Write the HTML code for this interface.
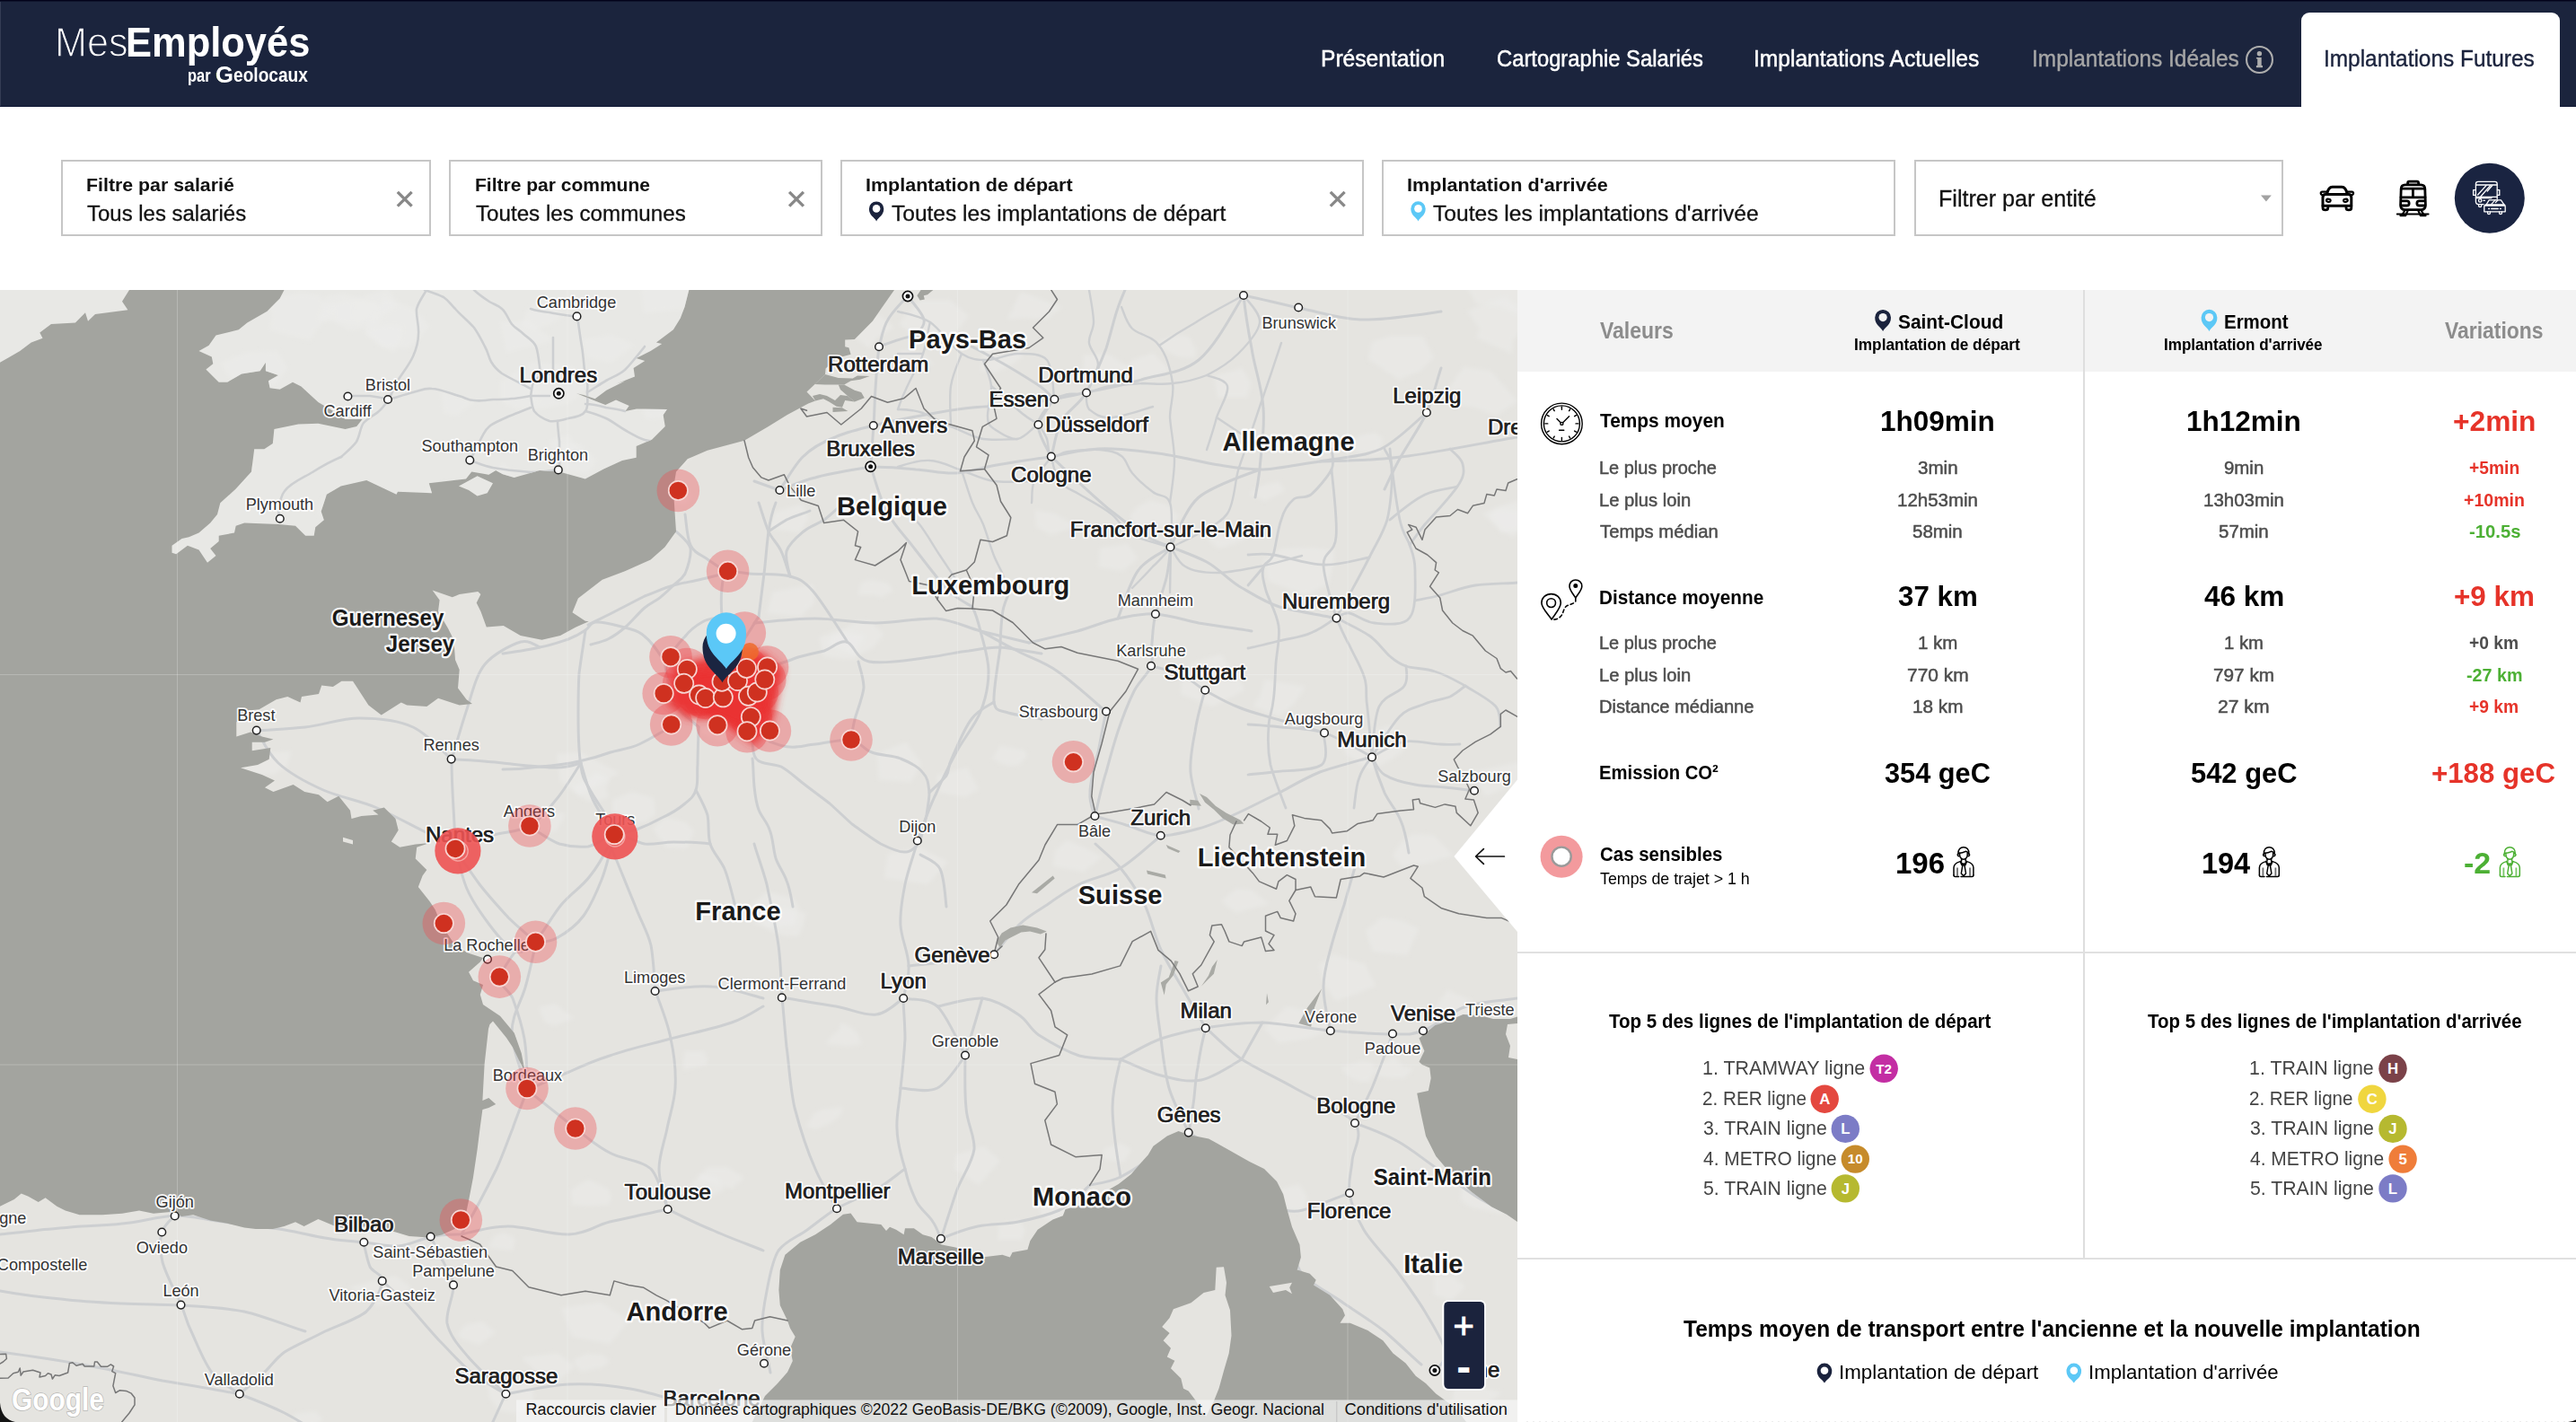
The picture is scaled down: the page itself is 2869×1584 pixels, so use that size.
<!DOCTYPE html>
<html lang="fr">
<head>
<meta charset="utf-8">
<title>MesEmployés par Geolocaux – Implantations Futures</title>
<style>
html,body{margin:0;padding:0;background:#fff;}
body{width:2869px;height:1584px;overflow:hidden;position:relative;font-family:"Liberation Sans",sans-serif;}
.abs{position:absolute;}
.t{position:absolute;white-space:nowrap;transform-origin:0 0;font-family:"Liberation Sans",sans-serif;}
.thin{-webkit-text-stroke:1.3px #1b233d;}
#hdr{left:0;top:0;width:2869px;height:119px;background:#1b243d;border-top:1px solid #03021a;border-bottom:1px solid #0d1532;box-sizing:border-box;box-shadow:inset 0 1px 0 #0f152c, inset 1px 0 0 #343c54;}
#tab{left:2563px;top:14px;width:288px;height:106px;background:#fff;border-radius:9px 9px 0 0;}
.fbox{position:absolute;top:178px;height:85px;border:2px solid #c6c6c6;box-sizing:border-box;background:#fff;}
#map{left:0;top:323px;width:1690px;height:1261px;overflow:hidden;background:#a3a49f;}
#panel{left:1690px;top:323px;width:1189px;height:1261px;background:#fff;}
#phead{left:0;top:0;width:1189px;height:91px;background:#f3f3f3;}
.vdiv{position:absolute;left:630px;top:0;width:2px;height:1079px;background:#dedede;}
.hdiv{position:absolute;left:0;width:1189px;height:2px;background:#e0e0e0;}
#icons{left:0;top:0;width:2869px;height:1584px;pointer-events:none;}
</style>
</head>
<body>
<header id="hdr" class="abs"></header>
<div id="tab" class="abs"></div>

<section id="filters">
<div class="fbox" style="left:68px;width:412px"></div>
<div class="fbox" style="left:500px;width:416px"></div>
<div class="fbox" style="left:936px;width:583px"></div>
<div class="fbox" style="left:1539px;width:572px"></div>
<div class="fbox" style="left:2132px;width:411px"></div>
</section>

<div id="map" class="abs">
<svg width="1690" height="1261" viewBox="0 323 1690 1261" style="position:absolute;left:0;top:0;display:block" font-family="Liberation Sans, sans-serif">
<defs><filter id="blur6" x="-30%" y="-30%" width="160%" height="160%"><feGaussianBlur stdDeviation="5"/></filter><filter id="blur1" x="-30%" y="-30%" width="160%" height="160%"><feGaussianBlur stdDeviation="0.7"/></filter><filter id="blur3" x="-30%" y="-30%" width="160%" height="160%"><feGaussianBlur stdDeviation="2.2"/></filter><clipPath id="gbclip"><path d="M316.5,323.0 L311.7,332.5 L297.5,346.7 L275.3,359.4 L265.8,367.3 L240.5,373.6 L232.6,384.7 L221.5,391.0 L235.8,397.4 L237.3,405.3 L229.4,411.6 L243.7,425.8 L253.2,425.8 L269.0,416.4 L289.6,413.2 L295.9,403.7 L295.9,413.2 L310.0,418.0 L299.0,424.3 L300.6,432.2 L311.7,433.8 L326.0,425.8 L335.4,430.6 L354.4,448.0 L370.3,457.5 L384.5,467.0 L403.5,467.0 L397.2,474.9 L384.5,478.0 L354.4,471.7 L332.3,472.4 L305.4,478.0 L303.8,493.9 L294.3,500.2 L283.2,500.2 L280.0,525.5 L262.7,544.5 L245.3,560.3 L242.0,573.0 L234.2,582.5 L221.5,593.6 L210.4,598.3 L202.5,600.0 L191.5,607.8 L191.5,615.7 L196.2,617.3 L208.9,607.8 L221.5,612.6 L231.0,626.8 L240.5,618.9 L234.2,611.0 L243.7,603.0 L243.7,596.7 L261.0,593.6 L262.7,585.7 L272.2,582.5 L310.0,584.0 L329.0,585.7 L340.2,596.7 L349.7,596.7 L351.3,587.2 L360.8,579.3 L357.6,569.8 L363.9,550.8 L379.7,541.4 L408.2,535.0 L441.5,550.8 L443.0,547.7 L481.0,549.3 L477.8,538.2 L519.0,533.4 L525.3,525.5 L544.3,528.7 L552.2,524.0 L560.0,528.3 L572.7,531.9 L601.0,524.0 L623.0,525.5 L651.8,533.4 L672.3,522.4 L693.0,512.9 L708.7,509.7 L708.7,497.0 L726.0,489.7 L740.8,475.0 L738.6,462.2 L742.9,456.0 L709.0,455.5 L696.5,458.0 L700.7,452.0 L686.0,445.4 L674.3,451.0 L662.7,446.4 L641.6,438.0 L650.0,440.0 L662.7,444.3 L675.4,434.8 L696.5,424.3 L686.6,427.4 L707.0,419.5 L705.6,410.0 L718.2,402.0 L708.7,399.0 L724.6,391.0 L737.2,383.0 L730.9,381.5 L749.9,367.3 L757.8,354.6 L762.5,342.0 L767.3,323.0Z"/></clipPath></defs>
<rect x="0" y="323" width="1690" height="1261" fill="#e5e4e0"/>
<g fill="#eeedeb" fill-opacity="0.5" filter="url(#blur3)" ><path d="M894,1032 L889,1043 L873,1042 L861,1038 L839,1028 L855,1014 L872,1012 L898,1017Z"/><path d="M1142,1370 L1138,1381 L1111,1381 L1113,1364 L1135,1359Z"/><path d="M907,672 L891,687 L854,683 L861,659 L905,651Z"/><path d="M225,592 L217,604 L181,594 L179,582 L219,570Z"/><path d="M392,633 L378,642 L357,642 L365,626 L380,624Z"/><path d="M1704,318 L1691,350 L1668,340 L1645,339 L1633,319 L1674,300 L1688,305Z"/><path d="M1183,342 L1165,356 L1140,354 L1122,356 L1132,335 L1137,325 L1164,335Z"/><path d="M1632,1433 L1616,1449 L1597,1442 L1597,1422 L1619,1423Z"/><path d="M1303,412 L1288,420 L1250,425 L1248,414 L1262,401 L1284,393Z"/><path d="M1690,447 L1666,463 L1643,454 L1603,448 L1630,409 L1660,413Z"/><path d="M937,1241 L927,1250 L908,1258 L898,1255 L906,1241 L915,1236 L939,1233Z"/><path d="M278,952 L250,967 L208,968 L221,935 L254,930Z"/><path d="M1090,879 L1075,888 L1047,883 L1043,864 L1077,855Z"/><path d="M773,506 L756,522 L739,520 L717,507 L737,483 L756,490Z"/><path d="M552,1484 L534,1498 L516,1492 L509,1487 L518,1476 L537,1472Z"/><path d="M955,723 L954,734 L939,734 L917,731 L914,719 L912,710 L932,702 L963,708Z"/><path d="M401,463 L390,475 L374,485 L344,466 L339,454 L368,435 L403,438Z"/><path d="M807,1325 L798,1330 L773,1335 L767,1323 L780,1307 L799,1313Z"/><path d="M1199,586 L1171,596 L1154,587 L1153,568 L1174,572Z"/><path d="M890,1011 L885,1030 L856,1033 L838,1020 L830,1013 L854,994 L883,1000Z"/><path d="M970,1519 L938,1543 L911,1537 L916,1506 L953,1492Z"/><path d="M1532,1098 L1513,1106 L1488,1115 L1475,1097 L1469,1075 L1484,1063 L1520,1074Z"/><path d="M1263,412 L1250,416 L1235,422 L1201,419 L1207,406 L1206,396 L1234,394 L1243,400Z"/><path d="M515,608 L511,621 L489,625 L474,616 L469,603 L483,596 L500,601Z"/><path d="M535,1123 L511,1133 L482,1137 L480,1115 L482,1099 L518,1095Z"/><path d="M1540,489 L1536,506 L1511,504 L1501,494 L1518,484 L1532,482Z"/><path d="M1444,780 L1439,786 L1425,798 L1396,787 L1403,775 L1409,757 L1454,765Z"/><path d="M358,399 L354,408 L345,412 L333,406 L325,403 L329,394 L347,389 L353,389Z"/><path d="M713,426 L710,445 L685,443 L665,438 L662,426 L659,417 L680,412 L695,418Z"/><path d="M499,1324 L492,1345 L473,1352 L453,1334 L451,1319 L470,1312 L500,1317Z"/><path d="M1260,1281 L1251,1295 L1226,1290 L1230,1280 L1248,1273Z"/><path d="M1026,850 L1015,871 L979,869 L977,839 L1009,827Z"/><path d="M1139,397 L1127,406 L1108,415 L1092,413 L1094,398 L1097,390 L1104,377 L1133,380Z"/><path d="M1332,389 L1331,399 L1314,398 L1294,389 L1292,379 L1314,373 L1324,375Z"/><path d="M901,577 L891,593 L856,589 L863,570 L893,562Z"/><path d="M432,685 L412,704 L396,700 L381,687 L393,675 L415,680Z"/><path d="M594,1554 L592,1576 L557,1572 L546,1558 L542,1539 L592,1536Z"/><path d="M773,926 L765,945 L742,944 L727,923 L741,910 L764,916Z"/><path d="M457,1381 L448,1389 L423,1392 L408,1386 L406,1371 L428,1363 L440,1372Z"/><path d="M701,1471 L679,1497 L637,1489 L625,1457 L669,1451Z"/><path d="M1108,1464 L1104,1472 L1070,1481 L1067,1470 L1064,1455 L1079,1446 L1099,1445Z"/><path d="M1414,1007 L1396,1011 L1377,1017 L1360,1004 L1377,990 L1393,991Z"/><path d="M1393,426 L1389,443 L1356,443 L1352,419 L1383,410Z"/><path d="M730,907 L720,915 L694,919 L682,905 L682,891 L704,882 L728,889Z"/><path d="M1658,1134 L1643,1142 L1611,1158 L1606,1138 L1597,1125 L1612,1103 L1638,1114Z"/><path d="M394,1142 L395,1166 L360,1157 L331,1142 L355,1119 L389,1120Z"/><path d="M1564,836 L1546,848 L1526,858 L1498,839 L1494,825 L1526,815 L1550,808Z"/><path d="M1699,1317 L1673,1352 L1639,1345 L1627,1337 L1629,1312 L1653,1309 L1689,1308Z"/><path d="M424,1253 L412,1268 L386,1270 L376,1268 L370,1249 L396,1237 L409,1238Z"/><path d="M1056,960 L1033,985 L985,978 L989,951 L1024,944Z"/><path d="M689,421 L686,430 L649,447 L617,428 L626,413 L663,389 L683,402Z"/><path d="M409,1291 L380,1325 L337,1317 L343,1296 L347,1279 L378,1276Z"/><path d="M626,915 L619,926 L602,928 L594,922 L580,907 L600,905 L629,906Z"/><path d="M1378,750 L1386,769 L1350,787 L1315,773 L1316,752 L1332,737 L1360,729 L1366,739Z"/><path d="M675,878 L678,888 L660,894 L647,888 L636,878 L646,872 L665,861 L679,868Z"/><path d="M1079,352 L1062,373 L1033,385 L1001,361 L1024,334 L1058,334Z"/><path d="M1040,406 L1024,410 L1008,410 L997,407 L999,396 L1005,390 L1029,395Z"/><path d="M829,1312 L815,1324 L792,1317 L778,1313 L787,1300 L810,1300Z"/><path d="M995,658 L982,665 L972,663 L955,663 L960,648 L970,646 L988,649Z"/><path d="M1574,1190 L1564,1201 L1550,1201 L1535,1199 L1531,1193 L1537,1186 L1553,1177 L1562,1188Z"/><path d="M1485,628 L1479,651 L1453,663 L1412,647 L1408,624 L1427,611 L1459,610 L1486,613Z"/><path d="M409,414 L394,420 L376,423 L358,418 L377,403 L392,401Z"/><path d="M300,362 L277,376 L267,375 L238,366 L240,357 L261,348 L282,345Z"/><path d="M1696,580 L1700,589 L1672,594 L1659,574 L1667,566 L1697,569Z"/><path d="M333,606 L328,615 L316,615 L299,608 L299,602 L319,588 L325,596Z"/><path d="M438,1164 L415,1177 L396,1186 L369,1191 L366,1170 L379,1148 L392,1139 L426,1137Z"/><path d="M1695,366 L1685,379 L1684,394 L1644,376 L1648,366 L1634,346 L1676,331 L1703,350Z"/><path d="M1114,1293 L1090,1320 L1063,1302 L1065,1286 L1096,1277Z"/><path d="M274,1079 L262,1086 L230,1086 L233,1067 L262,1064Z"/><path d="M1580,1035 L1567,1064 L1529,1060 L1521,1037 L1539,1022 L1563,1026Z"/><path d="M956,1153 L960,1163 L945,1165 L920,1163 L924,1156 L934,1148 L937,1139 L949,1145Z"/><path d="M690,861 L645,886 L624,870 L620,840 L646,838Z"/><path d="M679,1516 L671,1523 L647,1528 L638,1516 L652,1508 L671,1509Z"/><path d="M1391,598 L1377,605 L1357,611 L1345,601 L1350,589 L1359,580 L1373,587Z"/><path d="M640,1522 L621,1539 L598,1529 L581,1512 L621,1507Z"/><path d="M574,1380 L571,1393 L544,1390 L550,1377 L562,1373Z"/><path d="M277,512 L267,520 L252,521 L242,512 L252,507 L268,501Z"/><path d="M823,809 L814,816 L805,826 L779,817 L790,802 L800,792 L816,796Z"/><path d="M1208,1528 L1206,1537 L1194,1540 L1175,1535 L1178,1524 L1187,1514 L1204,1513Z"/><path d="M594,445 L592,462 L552,473 L531,444 L519,420 L545,420 L582,427Z"/><path d="M1294,1439 L1275,1449 L1261,1445 L1256,1433 L1280,1432Z"/><path d="M1087,1513 L1068,1527 L1022,1522 L1024,1497 L1059,1497Z"/><path d="M984,707 L972,722 L954,730 L919,717 L927,709 L955,691 L970,692Z"/><path d="M1531,1192 L1526,1205 L1515,1205 L1504,1201 L1493,1189 L1517,1182 L1529,1184Z"/><path d="M1228,954 L1207,971 L1173,965 L1175,948 L1188,936 L1205,943Z"/><path d="M1144,842 L1135,852 L1124,853 L1114,850 L1105,845 L1114,831 L1127,833 L1141,836Z"/><path d="M1456,1334 L1450,1350 L1426,1347 L1411,1330 L1428,1324 L1447,1319Z"/><path d="M788,1181 L787,1186 L761,1192 L761,1182 L763,1171 L784,1171Z"/><path d="M681,1334 L678,1342 L655,1343 L637,1342 L636,1325 L655,1314 L677,1324Z"/><path d="M458,1434 L443,1449 L421,1455 L410,1445 L388,1434 L420,1426 L440,1421Z"/><path d="M1720,577 L1699,586 L1685,598 L1668,588 L1651,572 L1673,563 L1692,557 L1696,568Z"/><path d="M474,468 L464,485 L438,477 L428,463 L455,461Z"/><path d="M1619,953 L1587,962 L1562,966 L1551,953 L1561,938 L1573,929 L1596,930Z"/><path d="M1205,1345 L1207,1359 L1172,1361 L1160,1354 L1157,1343 L1171,1331 L1191,1333Z"/><path d="M771,553 L762,563 L743,556 L746,546 L761,546Z"/><path d="M1707,869 L1678,877 L1655,887 L1638,860 L1663,855 L1691,849Z"/><path d="M1597,398 L1582,413 L1558,423 L1524,400 L1528,381 L1549,374 L1584,374Z"/><path d="M996,365 L978,375 L968,388 L949,373 L931,360 L942,349 L959,340 L983,354Z"/><path d="M1487,1146 L1457,1157 L1424,1162 L1408,1146 L1433,1121 L1470,1129Z"/><path d="M639,1134 L618,1143 L607,1139 L600,1122 L618,1118Z"/><path d="M1431,547 L1415,555 L1409,558 L1391,551 L1401,543 L1410,539 L1425,537Z"/><path d="M1313,575 L1303,590 L1282,584 L1267,588 L1258,575 L1266,565 L1281,557 L1300,562Z"/><path d="M241,408 L225,423 L194,427 L181,406 L194,391 L233,396Z"/><path d="M1267,622 L1251,636 L1224,632 L1225,610 L1256,606Z"/><path d="M320,853 L306,862 L290,863 L268,862 L274,840 L288,839 L324,837Z"/><path d="M388,1147 L389,1171 L352,1173 L312,1169 L316,1160 L331,1137 L355,1131 L387,1135Z"/><path d="M1673,1551 L1661,1560 L1637,1573 L1617,1568 L1618,1554 L1622,1539 L1646,1542 L1659,1548Z"/><path d="M1658,1206 L1641,1218 L1627,1219 L1593,1214 L1611,1191 L1619,1180 L1660,1186Z"/><path d="M360,1581 L345,1592 L330,1589 L327,1575 L351,1572Z"/><path d="M498,448 L487,479 L436,474 L407,453 L445,433 L460,438Z"/></g><g fill="none" stroke="#cdcfd1" stroke-linecap="round" stroke-linejoin="round" ><path d="M810,737 C809,729 805,700 804,687 C803,673 803,663 804,655 C805,647 805,640 810,638 C815,635 824,638 835,639 C847,640 868,639 880,642 C891,645 895,647 905,658 C915,669 933,699 940,709 C946,718 942,714 943,715" stroke-width="3"/><path d="M845,687 C846,679 849,655 851,639 C853,623 854,605 856,592 C858,578 862,565 864,560" stroke-width="3"/><path d="M854,744 C860,742 879,736 889,732 C900,729 909,727 918,725 C927,722 934,713 943,715 C951,717 953,734 968,737 C984,740 1016,735 1035,732 C1053,730 1066,726 1079,725 C1092,723 1100,721 1114,721 C1127,722 1152,727 1160,728" stroke-width="3"/><path d="M763,573 C764,578 765,599 769,607 C773,616 781,618 788,623 C795,628 806,635 810,638" stroke-width="3"/><path d="M753,592 C756,595 767,603 769,611 C770,619 766,632 763,639 C759,646 754,648 750,652 C746,656 742,660 737,664 C732,669 725,671 718,677 C711,683 703,693 696,699 C689,705 683,709 677,712 C671,715 661,717 658,718" stroke-width="3"/><path d="M740,737 C737,732 726,715 718,709 C711,702 705,702 696,699 C687,697 672,692 664,693 C657,693 657,699 652,702 C646,706 641,709 633,712 C624,715 613,719 601,721 C589,724 567,727 560,728" stroke-width="3"/><path d="M747,810 C741,813 723,824 712,829 C701,834 691,835 680,838 C669,842 659,845 645,848 C632,851 615,853 601,854 C587,856 567,857 560,857" stroke-width="3"/><path d="M778,810 C778,817 777,840 777,851 C776,863 778,872 775,880 C773,887 769,890 763,895 C756,901 746,907 737,911 C728,916 717,921 709,924 C700,927 690,929 687,930" stroke-width="3"/><path d="M775,880 C777,884 785,898 788,908 C790,918 788,930 791,940 C794,950 802,957 807,968 C812,980 817,1003 819,1010" stroke-width="3"/><path d="M838,813 C839,818 836,838 842,845 C847,852 861,850 870,854 C879,859 886,866 895,873 C904,880 915,888 924,895 C933,903 940,910 949,918 C959,925 971,934 981,940 C991,945 1002,950 1009,949 C1017,949 1023,939 1025,937" stroke-width="3"/><path d="M1025,952 C1029,955 1043,959 1047,968 C1052,978 1053,1003 1054,1010" stroke-width="3"/><path d="M857,826 C861,827 871,832 880,832 C888,833 897,830 908,829 C919,828 937,823 948,824 C958,826 962,835 971,838 C981,842 994,841 1003,845 C1013,849 1023,854 1028,861 C1034,867 1034,875 1035,883 C1035,891 1033,899 1032,908 C1030,917 1026,932 1025,937" stroke-width="3"/><path d="M838,845 C839,850 839,867 840,876 C841,886 842,894 845,902 C848,910 854,915 857,924 C861,933 861,946 864,956 C867,965 873,972 876,981 C880,990 882,1005 883,1010" stroke-width="3"/><path d="M652,702 C651,710 647,734 645,750 C644,766 644,780 644,797 C644,815 645,841 647,854 C649,867 651,869 655,876 C659,884 665,893 671,902 C676,911 684,926 687,930" stroke-width="3"/><path d="M590,921 C596,924 612,936 623,940 C634,943 644,944 655,943 C665,941 676,931 687,930 C697,930 708,938 718,940 C729,941 738,938 750,938 C762,938 784,939 791,940" stroke-width="3"/><path d="M956,737 C957,742 962,755 962,766 C961,776 955,791 952,801 C950,810 948,820 948,824" stroke-width="3"/><path d="M1114,721 C1113,731 1106,769 1107,782 C1109,794 1115,791 1123,794 C1132,797 1154,799 1160,801" stroke-width="3"/><path d="M1114,721 C1114,715 1115,691 1117,680 C1119,669 1125,659 1126,655" stroke-width="3"/><path d="M1107,782 C1103,785 1090,790 1082,801 C1074,811 1065,834 1060,845 C1055,855 1058,857 1054,864 C1049,870 1038,880 1035,883" stroke-width="3"/><path d="M856,592 C859,590 869,583 876,579 C884,575 898,571 902,569" stroke-width="3"/><path d="M845,560 C847,565 852,583 856,592 C860,601 866,605 870,614 C874,622 878,638 880,642" stroke-width="3"/><path d="M655,696 C660,693 676,686 687,680 C697,675 708,669 718,664 C729,660 739,655 750,652 C760,649 771,648 782,645 C792,643 805,639 810,638" stroke-width="3"/><path d="M880,642 C879,638 874,622 876,614 C879,605 889,597 895,592 C902,586 910,584 918,579 C925,574 936,563 940,560" stroke-width="3"/><path d="M804,687 C800,688 788,689 782,693 C775,697 769,701 763,709 C756,716 744,732 740,737" stroke-width="3"/><path d="M810,737 C813,733 823,720 829,712 C835,703 842,691 845,687" stroke-width="3"/><path d="M778,810 C774,805 756,794 750,782 C744,769 742,745 740,737" stroke-width="3"/><path d="M1171,509 C1176,513 1189,526 1200,536 C1211,546 1224,558 1236,568 C1248,577 1261,588 1272,595 C1283,602 1298,607 1304,609" stroke-width="3"/><path d="M1304,609 C1303,615 1302,632 1299,644 C1296,656 1290,672 1287,684 C1284,696 1284,706 1283,716 C1282,726 1285,733 1282,742 C1279,751 1269,758 1263,770 C1257,782 1250,800 1245,815 C1240,830 1236,845 1232,860 C1227,875 1222,899 1220,907" stroke-width="3"/><path d="M1304,609 C1310,612 1331,619 1344,626 C1357,633 1367,645 1380,653 C1394,661 1407,670 1425,676 C1443,681 1478,686 1489,689" stroke-width="3"/><path d="M1282,742 C1288,743 1307,748 1317,752 C1327,757 1332,763 1342,769 C1353,775 1366,783 1380,788 C1394,794 1409,797 1425,802 C1441,806 1467,814 1475,816" stroke-width="3"/><path d="M1385,329 C1386,339 1390,367 1394,388 C1397,409 1406,433 1407,455 C1409,478 1404,506 1403,523 C1401,539 1399,549 1398,554" stroke-width="3"/><path d="M1174,445 C1180,443 1194,441 1210,437 C1225,434 1247,430 1268,424 C1288,417 1315,417 1335,401 C1355,385 1377,341 1385,329" stroke-width="3"/><path d="M1385,329 C1395,331 1425,338 1446,343 C1468,347 1489,355 1515,356 C1542,357 1590,349 1605,347" stroke-width="3"/><path d="M1542,545 C1545,539 1552,523 1560,509 C1568,495 1581,476 1589,460 C1596,443 1602,418 1605,410" stroke-width="3"/><path d="M1171,509 C1179,507 1203,501 1223,500 C1242,499 1268,502 1290,505 C1313,508 1338,515 1358,518 C1377,521 1388,523 1407,523 C1426,522 1448,517 1470,514 C1492,510 1518,509 1538,500 C1557,491 1580,466 1589,460" stroke-width="3"/><path d="M1470,514 C1485,513 1523,514 1560,509 C1597,505 1668,490 1690,487" stroke-width="3"/><path d="M1171,509 C1173,502 1176,480 1182,469 C1189,457 1202,451 1210,437 C1218,424 1226,403 1232,388 C1237,372 1241,354 1245,343 C1249,331 1253,324 1254,320" stroke-width="3"/><path d="M1146,716 C1155,714 1184,707 1200,703 C1217,698 1231,692 1245,689 C1260,686 1272,683 1287,684 C1302,685 1317,690 1335,694 C1353,697 1384,701 1394,703" stroke-width="3"/><path d="M970,520 C978,520 1004,521 1020,523 C1036,524 1050,528 1065,527 C1080,526 1092,521 1110,518 C1128,515 1161,510 1171,509" stroke-width="3"/><path d="M973,474 C981,472 1003,467 1020,464 C1037,461 1056,457 1074,455 C1092,453 1111,452 1128,451 C1145,449 1167,446 1174,445" stroke-width="3"/><path d="M979,386 C986,384 1006,375 1020,374 C1034,373 1050,374 1065,379 C1080,383 1095,393 1110,401 C1125,409 1144,421 1155,428 C1166,435 1171,442 1174,445" stroke-width="3"/><path d="M1011,330 C1014,334 1028,349 1029,356 C1031,363 1022,371 1020,374" stroke-width="3"/><path d="M970,520 C973,529 980,557 989,572 C997,587 1009,598 1020,613 C1031,627 1046,647 1056,658 C1067,668 1079,673 1083,676" stroke-width="3"/><path d="M1083,676 C1085,680 1089,691 1092,703 C1095,715 1101,733 1101,748 C1101,763 1098,778 1092,793 C1086,808 1073,823 1065,838 C1057,853 1050,866 1043,883 C1035,899 1025,928 1022,937" stroke-width="3"/><path d="M1232,793 C1230,800 1226,823 1223,838 C1219,853 1214,871 1214,883 C1213,894 1218,905 1219,909" stroke-width="3"/><path d="M1219,909 C1225,911 1242,915 1254,919 C1266,922 1279,930 1293,931 C1306,931 1320,927 1335,923 C1350,919 1365,912 1380,905 C1395,898 1410,890 1425,883 C1440,875 1453,867 1470,860 C1487,854 1518,846 1528,843" stroke-width="3"/><path d="M1342,769 C1340,776 1333,800 1331,815 C1328,830 1325,846 1326,860 C1327,874 1334,894 1335,901" stroke-width="3"/><path d="M1528,843 C1530,850 1537,871 1542,883 C1547,894 1556,903 1560,914 C1565,925 1568,944 1569,950" stroke-width="3"/><path d="M868,546 C875,544 891,536 908,532 C924,527 959,522 970,520" stroke-width="3"/><path d="M970,520 C970,512 972,488 973,474 C974,459 974,447 975,433 C976,418 978,394 979,386" stroke-width="3"/><path d="M868,546 C873,540 884,519 894,509 C904,499 917,492 930,487 C943,481 966,476 973,474" stroke-width="3"/><path d="M840,536 L868,546" stroke-width="3"/><path d="M1092,703 C1099,706 1118,718 1133,725 C1147,733 1161,736 1178,748 C1194,759 1223,785 1232,793" stroke-width="3"/><path d="M840,694 C851,693 885,689 908,689 C930,689 953,694 975,694 C998,694 1023,688 1043,689 C1062,691 1075,698 1092,703 C1109,707 1137,714 1146,716" stroke-width="3"/><path d="M979,386 C981,381 983,365 989,356 C994,347 1007,334 1011,330" stroke-width="3"/><path d="M1174,445 C1171,449 1157,462 1156,473 C1156,484 1168,503 1171,509" stroke-width="3"/><path d="M1304,609 C1298,614 1277,622 1268,635 C1258,648 1249,680 1245,689" stroke-width="3"/><path d="M1403,523 C1391,528 1352,540 1335,554 C1319,568 1309,600 1304,609" stroke-width="3"/><path d="M0,1375 C8,1374 30,1372 45,1370 C60,1369 75,1367 91,1366 C106,1365 119,1365 136,1363 C153,1362 176,1355 195,1354 C214,1354 229,1359 249,1361 C269,1364 298,1367 317,1370 C336,1373 348,1377 362,1379 C377,1382 392,1382 405,1384 C419,1385 431,1389 444,1388 C456,1387 468,1380 480,1378 C491,1375 508,1375 514,1375" stroke-width="3"/><path d="M195,1354 C192,1357 183,1364 180,1373 C178,1381 178,1393 181,1406 C185,1420 196,1441 202,1454 C207,1466 207,1471 213,1483 C219,1496 227,1517 236,1529 C244,1540 262,1549 267,1553" stroke-width="3"/><path d="M405,1384 C406,1388 409,1404 412,1411 C416,1418 426,1419 426,1427 C425,1435 418,1451 408,1461 C397,1470 377,1476 362,1483 C347,1491 328,1499 317,1506 C306,1514 303,1521 294,1529 C286,1537 271,1549 267,1553" stroke-width="3"/><path d="M480,1378 C482,1382 489,1398 494,1406 C498,1415 504,1420 505,1431 C506,1443 496,1461 498,1474 C501,1488 510,1498 521,1511 C532,1524 556,1546 563,1553" stroke-width="3"/><path d="M426,1427 C430,1431 442,1441 453,1452 C463,1463 477,1480 489,1493 C501,1505 513,1519 525,1529 C538,1539 557,1549 563,1553" stroke-width="3"/><path d="M563,1553 C575,1551 611,1543 634,1542 C657,1541 679,1543 702,1547 C725,1551 751,1560 770,1565 C789,1570 808,1573 815,1574" stroke-width="3"/><path d="M202,1454 C213,1455 249,1456 272,1461 C295,1466 328,1480 340,1483" stroke-width="3"/><path d="M0,1438 C11,1440 45,1445 68,1447 C91,1450 114,1451 136,1452 C158,1453 191,1453 202,1454" stroke-width="3"/><path d="M0,1506 C15,1508 60,1514 91,1520 C121,1525 152,1532 181,1538 C211,1543 252,1550 267,1553" stroke-width="3"/><path d="M587,1214 C585,1221 576,1242 571,1257 C565,1272 559,1289 553,1302 C546,1316 541,1326 534,1339 C528,1351 517,1369 514,1375" stroke-width="3"/><path d="M587,1214 C596,1221 626,1245 641,1257 C656,1269 665,1277 679,1284 C693,1292 714,1292 725,1302 C735,1313 740,1340 744,1347" stroke-width="3"/><path d="M514,1375 C523,1373 546,1366 566,1366 C586,1366 615,1376 634,1375 C653,1374 661,1366 679,1361 C698,1357 733,1349 744,1347" stroke-width="3"/><path d="M587,1214 C587,1205 587,1174 584,1157 C581,1140 575,1123 571,1112 C566,1101 556,1099 557,1089 C559,1080 573,1060 580,1053 C586,1046 588,1056 596,1049 C604,1041 615,1020 625,1008 C635,996 648,988 657,976 C666,965 676,946 679,940" stroke-width="3"/><path d="M587,1214 C595,1211 619,1200 634,1194 C649,1187 660,1182 679,1176 C698,1169 725,1163 747,1157 C770,1151 798,1145 815,1139 C832,1133 844,1124 850,1121" stroke-width="3"/><path d="M730,1104 C733,1113 744,1139 747,1157 C751,1175 753,1195 752,1212 C751,1228 746,1242 743,1257 C740,1272 734,1287 734,1302 C734,1317 742,1340 744,1347" stroke-width="3"/><path d="M744,1347 C752,1351 775,1363 793,1370 C810,1378 841,1389 850,1393" stroke-width="3"/><path d="M507,947 C512,953 525,973 534,985 C544,998 556,1011 566,1022 C576,1032 591,1044 596,1049" stroke-width="3"/><path d="M730,1104 C729,1095 728,1069 725,1053 C721,1037 714,1027 707,1008 C699,989 684,951 679,940" stroke-width="3"/><path d="M730,1104 C740,1103 772,1097 793,1099 C813,1100 841,1110 850,1112" stroke-width="3"/><path d="M267,1553 C275,1556 301,1566 317,1574 C333,1582 355,1597 362,1601" stroke-width="3"/><path d="M563,1553 L543,1597" stroke-width="3"/><path d="M1006,1112 C1006,1120 1008,1141 1008,1157 C1007,1174 1005,1195 1003,1212 C1002,1228 998,1242 999,1257 C999,1272 1004,1289 1008,1302 C1011,1316 1016,1329 1021,1339 C1026,1348 1035,1354 1039,1361 C1044,1368 1046,1377 1048,1380" stroke-width="3"/><path d="M1008,1302 C1002,1306 988,1318 976,1325 C963,1332 945,1339 932,1346 C919,1354 910,1362 899,1370 C888,1378 875,1382 867,1393 C860,1404 857,1423 854,1438 C851,1453 848,1468 849,1483 C850,1499 857,1521 858,1529" stroke-width="3"/><path d="M1048,1380 C1055,1377 1075,1369 1089,1366 C1104,1363 1119,1364 1134,1361 C1149,1358 1166,1354 1180,1348 C1193,1341 1208,1325 1214,1320" stroke-width="3"/><path d="M1006,1112 C1007,1106 1013,1089 1012,1076 C1012,1062 1004,1046 1003,1031 C1002,1015 1005,1000 1008,985 C1011,970 1019,948 1021,940" stroke-width="3"/><path d="M1006,1112 C1012,1114 1032,1111 1044,1121 C1055,1132 1070,1166 1075,1176" stroke-width="3"/><path d="M1044,1121 C1052,1120 1079,1111 1094,1112 C1109,1114 1124,1123 1134,1130 C1145,1137 1146,1145 1157,1153 C1168,1160 1187,1171 1202,1176 C1217,1180 1240,1179 1248,1180" stroke-width="3"/><path d="M1012,1076 C1020,1075 1042,1073 1057,1071 C1073,1069 1099,1065 1107,1063" stroke-width="3"/><path d="M1248,1180 C1255,1176 1277,1163 1293,1157 C1309,1152 1324,1148 1343,1145 C1362,1142 1383,1139 1406,1139 C1429,1140 1458,1146 1482,1148 C1506,1150 1534,1152 1551,1152 C1568,1152 1571,1153 1585,1148 C1599,1143 1615,1127 1633,1121 C1650,1115 1681,1114 1690,1112" stroke-width="3"/><path d="M1343,1145 C1350,1151 1367,1169 1383,1180 C1400,1191 1421,1200 1442,1212 C1463,1224 1498,1238 1509,1251 C1519,1265 1507,1280 1506,1293 C1505,1306 1501,1316 1503,1329 C1505,1342 1511,1356 1519,1370 C1528,1385 1544,1400 1556,1416 C1567,1431 1578,1446 1587,1461 C1596,1476 1608,1495 1610,1506 C1612,1517 1600,1523 1599,1527" stroke-width="3"/><path d="M1343,1145 C1341,1152 1336,1175 1334,1189 C1331,1203 1331,1218 1329,1230 C1327,1242 1325,1256 1324,1262" stroke-width="3"/><path d="M1324,1262 C1330,1265 1347,1276 1361,1284 C1375,1293 1395,1301 1406,1311 C1417,1322 1423,1336 1429,1348 C1434,1360 1434,1372 1438,1384 C1442,1396 1442,1409 1451,1420 C1461,1431 1482,1441 1497,1452 C1512,1462 1528,1472 1542,1483 C1556,1495 1576,1514 1583,1520" stroke-width="3"/><path d="M1324,1262 C1317,1266 1297,1280 1284,1289 C1271,1297 1259,1306 1248,1311 C1236,1317 1219,1319 1214,1320" stroke-width="3"/><path d="M1509,1251 C1517,1254 1540,1262 1556,1271 C1571,1279 1586,1292 1601,1302 C1616,1313 1631,1325 1646,1334 C1661,1343 1683,1353 1690,1357" stroke-width="3"/><path d="M1482,1148 C1480,1140 1474,1114 1474,1099 C1474,1083 1479,1068 1483,1053 C1487,1038 1492,1023 1497,1008 C1501,993 1508,970 1510,963" stroke-width="3"/><path d="M1248,1180 C1255,1183 1278,1194 1293,1198 C1308,1202 1323,1206 1338,1203 C1353,1200 1376,1184 1383,1180" stroke-width="3"/><path d="M1509,1251 C1512,1245 1521,1228 1528,1212 C1535,1195 1547,1162 1551,1152" stroke-width="3"/><path d="M1324,1262 C1320,1253 1307,1229 1302,1212 C1297,1194 1295,1174 1293,1157 C1291,1141 1288,1126 1288,1112 C1288,1099 1292,1082 1293,1076" stroke-width="3"/><path d="M1107,1063 C1112,1058 1125,1040 1134,1031 C1144,1021 1155,1015 1166,1008 C1177,1000 1189,992 1202,985 C1216,978 1233,976 1248,967 C1263,958 1285,937 1293,931" stroke-width="3"/><path d="M1220,940 C1225,945 1239,956 1248,967 C1257,978 1267,993 1275,1008 C1282,1023 1286,1043 1293,1058 C1300,1073 1307,1084 1316,1099 C1324,1113 1338,1137 1343,1145" stroke-width="3"/><path d="M1075,1176 C1070,1182 1056,1206 1044,1212 C1032,1218 1010,1212 1003,1212" stroke-width="3"/><path d="M1075,1176 L1094,1112" stroke-width="3"/><path d="M871,1111 C872,1120 874,1146 876,1166 C879,1187 880,1212 885,1234 C891,1257 900,1284 908,1302 C916,1321 928,1339 932,1346" stroke-width="3"/><path d="M871,1111 C881,1113 913,1118 931,1121 C948,1124 963,1132 976,1130 C988,1129 1001,1115 1006,1112" stroke-width="3"/><path d="M871,1111 C870,1102 870,1074 867,1053 C864,1032 858,1004 854,985 C849,966 842,948 840,940" stroke-width="3"/><path d="M1048,1380 C1051,1371 1060,1342 1066,1325 C1073,1308 1083,1295 1085,1280 C1086,1265 1077,1252 1076,1234 C1074,1217 1075,1185 1075,1176" stroke-width="3"/><path d="M1503,1329 C1494,1332 1464,1345 1451,1348 C1439,1351 1433,1348 1429,1348" stroke-width="3"/><path d="M1248,1180 C1246,1189 1239,1212 1239,1234 C1239,1256 1246,1299 1248,1311" stroke-width="3"/><path d="M1383,1180 L1406,1139" stroke-width="3"/><path d="M1483,500 C1483,504 1487,514 1483,523 C1479,531 1467,545 1460,551 C1453,556 1446,552 1441,556 C1435,561 1430,568 1427,579 C1423,589 1421,609 1418,618 C1415,627 1408,626 1407,632 C1405,639 1407,647 1410,658 C1413,668 1422,683 1424,697 C1426,711 1422,725 1421,739 C1420,753 1420,770 1418,781 C1417,793 1413,798 1413,809 C1412,821 1412,837 1415,852 C1419,867 1429,892 1432,900" stroke-width="2.8"/><path d="M1488,688 C1486,679 1474,644 1474,629 C1474,614 1487,616 1488,598 C1490,581 1484,535 1483,523" stroke-width="2.8"/><path d="M1488,688 C1491,688 1495,682 1503,683 C1510,684 1519,693 1531,694 C1542,695 1563,698 1570,688 C1578,679 1576,649 1576,635 C1576,621 1573,616 1570,607 C1567,598 1563,597 1559,579 C1555,561 1549,513 1548,500" stroke-width="2.8"/><path d="M1488,688 C1495,677 1516,639 1525,621 C1534,603 1540,595 1545,579 C1549,562 1551,536 1550,523 C1550,509 1543,504 1542,500" stroke-width="2.8"/><path d="M1390,722 C1396,721 1412,717 1424,714 C1435,711 1450,710 1460,705 C1471,701 1484,691 1488,688" stroke-width="2.8"/><path d="M1488,688 C1491,694 1497,709 1503,719 C1508,730 1516,743 1519,753 C1523,763 1521,766 1522,781 C1524,796 1527,833 1528,843" stroke-width="2.8"/><path d="M1488,688 C1495,692 1515,701 1525,708 C1535,715 1541,725 1548,731 C1554,736 1557,739 1566,742 C1574,745 1587,744 1598,748 C1609,751 1621,758 1632,764 C1643,771 1659,779 1666,787 C1672,794 1670,806 1671,809" stroke-width="2.8"/><path d="M1566,742 C1566,746 1569,757 1564,764 C1559,772 1542,774 1536,787 C1530,800 1529,834 1528,843" stroke-width="2.8"/><path d="M1528,843 C1533,836 1549,808 1559,798 C1569,788 1578,788 1587,784 C1596,780 1608,779 1615,776 C1623,772 1629,766 1632,764" stroke-width="2.8"/><path d="M1528,843 C1534,840 1552,829 1564,826 C1577,824 1593,829 1604,829 C1614,830 1623,829 1626,829" stroke-width="2.8"/><path d="M1528,843 C1530,846 1534,858 1542,863 C1550,868 1564,872 1576,874 C1587,876 1598,876 1609,877 C1620,878 1636,880 1642,881" stroke-width="2.8"/><path d="M1390,807 C1395,807 1404,808 1418,809 C1432,811 1456,811 1474,816 C1493,822 1519,839 1528,843" stroke-width="2.8"/><path d="M1528,843 C1525,847 1517,856 1514,866 C1510,875 1509,894 1508,900" stroke-width="2.8"/><path d="M1474,816 C1474,822 1481,844 1472,852 C1462,859 1432,858 1418,860 C1405,862 1395,862 1390,863" stroke-width="2.8"/><path d="M1570,607 C1573,603 1578,595 1587,584 C1596,574 1616,553 1623,542 C1631,531 1631,524 1629,517 C1628,510 1617,503 1615,500" stroke-width="2.8"/><path d="M1548,579 C1554,574 1574,557 1587,551 C1600,545 1617,544 1623,542" stroke-width="2.8"/><path d="M1390,652 L1407,632" stroke-width="2.8"/><path d="M1390,618 C1395,618 1404,616 1418,618 C1432,620 1457,629 1474,629 C1492,630 1517,622 1525,621" stroke-width="2.8"/><path d="M1576,669 C1580,668 1593,666 1604,663 C1615,660 1629,654 1643,652 C1657,650 1682,650 1690,649" stroke-width="2.8"/><path d="M1000,347 C1006,349 1024,351 1036,359 C1047,366 1060,387 1071,394 C1082,401 1089,401 1100,401 C1110,401 1122,394 1133,394 C1144,394 1159,393 1166,401 C1173,409 1173,437 1174,444" stroke-width="2.4"/><path d="M1174,444 C1177,443 1184,440 1190,439 C1195,438 1202,440 1210,438 C1218,436 1227,431 1237,430 C1247,428 1261,428 1273,427 C1284,427 1294,429 1306,427 C1318,426 1331,423 1344,418 C1356,412 1369,404 1379,394 C1389,384 1402,369 1403,359 C1404,348 1388,334 1385,329" stroke-width="2.4"/><path d="M1210,438 C1210,441 1209,451 1213,456 C1218,460 1225,466 1237,465 C1249,465 1276,455 1284,453" stroke-width="2.4"/><path d="M1156,472 C1158,475 1164,483 1166,489 C1168,495 1167,507 1171,509 C1175,511 1180,504 1190,503 C1199,502 1215,500 1225,501 C1235,502 1243,503 1249,508 C1255,512 1255,520 1261,527 C1267,534 1277,543 1284,548 C1291,554 1300,550 1303,560 C1307,570 1304,601 1304,610" stroke-width="2.4"/><path d="M1171,509 C1167,514 1155,528 1152,536 C1148,545 1150,556 1149,560" stroke-width="2.4"/><path d="M1171,509 C1172,514 1175,529 1180,536 C1185,543 1192,545 1201,550 C1211,556 1227,564 1237,572 C1247,579 1249,589 1261,596 C1272,602 1297,607 1304,610" stroke-width="2.4"/><path d="M1304,610 C1309,607 1321,602 1332,596 C1342,589 1359,584 1367,572 C1375,560 1375,538 1379,524 C1383,511 1387,501 1391,489 C1395,477 1399,465 1403,453 C1407,441 1411,430 1415,418 C1419,406 1425,388 1427,382" stroke-width="2.4"/><path d="M1304,610 C1307,613 1311,626 1320,631 C1328,636 1342,638 1355,638 C1369,638 1387,634 1403,631 C1419,628 1442,621 1450,619" stroke-width="2.4"/><path d="M1304,610 C1301,613 1292,624 1284,631 C1277,639 1265,651 1261,655" stroke-width="2.4"/><path d="M1304,610 L1303,660" stroke-width="2.4"/><path d="M1213,323 C1214,329 1218,349 1218,359 C1218,368 1212,374 1213,382 C1214,390 1223,397 1223,406 C1222,415 1212,433 1210,438" stroke-width="2.4"/><path d="M1249,342 C1251,346 1254,359 1261,366 C1268,373 1284,374 1291,385 C1299,395 1304,414 1306,427 C1308,441 1303,451 1303,465 C1304,479 1308,497 1308,513 C1308,528 1304,552 1303,560" stroke-width="2.4"/><path d="M1291,385 C1298,380 1316,368 1332,359 C1347,349 1376,334 1385,329" stroke-width="2.4"/><path d="M1095,401 C1096,406 1103,419 1104,430 C1105,440 1099,457 1100,465 C1100,473 1103,475 1109,479 C1115,483 1125,490 1133,489 C1141,488 1152,475 1156,472" stroke-width="2.4"/><path d="M1000,456 C1005,456 1019,457 1028,460 C1038,464 1048,470 1059,475 C1070,479 1083,487 1095,489 C1107,491 1126,489 1133,489" stroke-width="2.4"/><path d="M1000,520 C1006,518 1024,512 1036,513 C1047,513 1059,520 1071,524 C1083,528 1093,534 1107,536 C1120,538 1144,536 1152,536" stroke-width="2.4"/><path d="M1071,524 C1073,530 1079,550 1083,560 C1087,570 1091,574 1095,584 C1099,594 1103,609 1107,619 C1111,629 1116,636 1118,643 C1121,650 1122,657 1123,660" stroke-width="2.4"/><path d="M1000,560 C1004,564 1016,574 1024,584 C1032,594 1039,607 1047,619 C1055,631 1067,649 1071,655" stroke-width="2.4"/><path d="M1156,472 C1152,470 1141,463 1133,456 C1124,449 1109,434 1104,430" stroke-width="2.4"/><path d="M1174,444 L1156,472" stroke-width="2.4"/><path d="M1355,465 L1391,489" stroke-width="2.4"/><path d="M1344,501 C1346,495 1352,477 1355,465 C1359,453 1369,438 1367,430 C1365,422 1348,420 1344,418" stroke-width="2.4"/><path d="M1036,359 C1034,364 1032,383 1028,394 C1025,405 1019,412 1014,423 C1009,433 1002,450 1000,456" stroke-width="2.4"/><path d="M1071,394 C1069,400 1061,416 1059,430 C1057,443 1059,467 1059,475" stroke-width="2.4"/><path d="M1000,394 L1028,394" stroke-width="2.4"/><path d="M286,814 C295,813 321,812 340,810 C359,808 380,800 400,800 C420,800 443,802 460,810 C477,818 496,840 503,846" stroke-width="3"/><path d="M286,814 C290,820 298,839 310,850 C322,861 342,872 360,880 C378,888 402,892 420,900 C438,908 456,918 470,925 C484,932 501,942 507,945" stroke-width="3"/><path d="M503,846 C512,846 540,848 560,850 C580,852 606,855 620,855 C634,855 642,851 647,850" stroke-width="3"/><path d="M503,846 C503,855 504,883 505,900 C506,917 507,938 507,945" stroke-width="3"/><path d="M503,846 C506,836 514,808 520,790 C526,772 530,752 540,740 C550,728 570,718 580,715 C590,712 598,720 601,721" stroke-width="3"/><path d="M507,945 C514,942 536,934 550,930 C564,926 578,927 590,920 C602,913 610,902 620,890 C630,878 642,857 647,850" stroke-width="3"/><path d="M507,945 C509,952 514,976 520,990 C526,1004 536,1018 545,1030 C554,1042 566,1057 575,1060 C584,1063 593,1052 597,1050" stroke-width="3"/><path d="M684,930 C682,938 676,965 670,980 C664,995 658,1009 650,1020 C642,1031 629,1040 620,1045 C611,1050 601,1049 597,1050" stroke-width="3"/><path d="M597,1050 C595,1058 590,1083 585,1100 C580,1117 570,1131 570,1150 C570,1169 584,1202 587,1212" stroke-width="3"/><path d="M647,850 C649,857 654,877 660,890 C666,903 680,923 684,930" stroke-width="3"/></g>
<g id="water">
<path d="M996.0,323.0 L981.3,344.0 L971.8,357.8 L951.8,377.9 L941.2,378.4 L941.2,386.3 L945.4,387.3 L947.6,394.7 L931.7,399.0 L919.6,410.6 L919.0,416.9 L907.5,428.0 L898.5,436.4 L908.1,446.4 L900.2,449.6 L876.5,462.2 L855.9,474.9 L829.0,490.7 L787.8,501.8 L765.7,511.3 L753.0,525.5 L749.9,544.5 L751.5,569.8 L753.0,592.0 L740.4,609.4 L724.6,623.6 L696.0,636.3 L670.8,645.8 L643.9,666.4 L637.5,682.2 L651.8,691.7 L655.7,692.2 L641.5,698.5 L624.0,708.0 L603.5,712.8 L579.7,708.0 L560.8,697.0 L541.8,698.5 L535.4,681.0 L530.7,671.6 L535.4,662.0 L532.3,659.0 L511.7,662.0 L503.8,665.3 L481.6,657.4 L489.6,668.5 L488.0,681.0 L499.0,700.0 L505.4,712.8 L507.0,735.0 L511.7,746.0 L510.0,766.6 L519.6,779.2 L526.0,784.0 L511.7,785.6 L488.0,777.7 L475.3,787.0 L453.2,785.6 L446.8,782.4 L424.7,796.6 L410.4,785.6 L393.0,758.7 L380.4,758.7 L370.9,765.0 L358.2,763.4 L355.0,773.0 L336.0,776.0 L334.5,782.4 L320.3,776.0 L307.6,779.2 L288.6,790.3 L271.2,792.0 L263.3,804.6 L263.3,820.4 L279.0,815.6 L291.8,820.4 L304.4,823.5 L295.0,826.7 L280.7,826.7 L280.7,836.2 L301.3,833.0 L299.7,845.7 L287.0,852.0 L268.0,855.2 L291.8,863.0 L306.0,869.4 L295.0,877.3 L304.4,882.0 L326.6,874.0 L339.2,882.0 L355.0,885.3 L364.6,893.2 L377.2,886.8 L390.0,902.7 L391.5,912.0 L402.5,909.0 L421.5,907.4 L415.2,902.7 L427.8,899.5 L440.5,912.0 L443.7,924.8 L435.8,937.5 L445.3,943.8 L462.7,940.6 L478.5,939.0 L464.2,943.8 L462.7,956.5 L475.3,969.0 L470.6,975.4 L465.8,988.0 L478.5,1004.0 L484.8,1013.4 L491.0,1029.2 L503.8,1048.2 L519.6,1060.9 L538.0,1067.0 L534.8,1071.6 L522.0,1082.7 L527.0,1092.2 L538.0,1097.0 L534.8,1108.0 L538.0,1119.0 L557.0,1131.8 L572.8,1150.8 L580.7,1173.0 L584.0,1190.0 L582.5,1190.0 L577.5,1180.0 L571.0,1166.6 L564.0,1156.0 L549.0,1137.5 L545.5,1141.0 L544.0,1146.0 L539.6,1185.6 L537.4,1226.0 L544.3,1223.0 L552.2,1229.9 L544.3,1234.0 L537.4,1236.0 L534.8,1255.0 L531.6,1280.5 L526.9,1312.0 L522.0,1337.5 L519.0,1351.7 L506.3,1369.0 L492.0,1375.4 L477.8,1378.6 L455.7,1377.0 L439.9,1372.3 L424.0,1369.0 L408.2,1366.0 L389.2,1369.0 L373.4,1366.0 L354.4,1358.0 L338.6,1366.0 L329.0,1361.2 L316.5,1366.0 L303.8,1369.0 L284.8,1369.0 L272.2,1367.5 L253.2,1362.8 L234.2,1359.6 L215.2,1353.3 L202.5,1354.9 L189.9,1350.0 L170.9,1351.7 L155.0,1348.5 L136.0,1351.7 L114.0,1353.3 L88.6,1353.3 L72.8,1348.5 L63.3,1343.8 L50.6,1334.3 L42.7,1339.0 L31.6,1332.7 L23.7,1329.6 L15.8,1335.9 L0.0,1343.8 L0.0,1343.8 L0.0,323.0Z" fill="#a3a49f" />
<path d="M837.8,1584.0 L852.0,1555.0 L866.0,1541.0 L877.0,1528.6 L882.8,1516.0 L880.0,1502.0 L885.7,1489.0 L880.0,1479.4 L877.0,1471.0 L868.8,1454.0 L867.4,1437.0 L868.8,1414.7 L874.4,1397.8 L891.3,1383.7 L908.0,1375.3 L925.0,1364.0 L939.0,1352.8 L947.5,1351.4 L954.6,1361.2 L981.3,1364.0 L987.0,1371.0 L991.0,1366.8 L998.0,1369.7 L1006.6,1375.3 L1008.0,1368.3 L1017.9,1368.3 L1027.7,1375.3 L1037.6,1378.0 L1048.8,1386.5 L1062.9,1389.3 L1074.0,1392.0 L1093.8,1400.6 L1116.3,1397.8 L1124.8,1400.6 L1127.6,1395.0 L1144.4,1392.0 L1147.3,1382.3 L1155.7,1369.7 L1172.6,1358.4 L1183.8,1354.2 L1186.6,1347.0 L1206.3,1341.5 L1226.0,1330.3 L1245.7,1319.0 L1259.8,1308.0 L1271.0,1295.0 L1278.7,1286.6 L1284.4,1276.8 L1299.8,1265.6 L1312.5,1260.0 L1323.7,1264.0 L1346.2,1268.4 L1368.7,1281.0 L1391.2,1293.7 L1408.0,1302.0 L1422.0,1316.0 L1429.2,1330.2 L1433.4,1347.0 L1439.0,1366.8 L1447.5,1386.5 L1448.9,1400.5 L1444.7,1414.6 L1458.7,1418.8 L1465.7,1425.8 L1463.0,1431.5 L1481.2,1442.7 L1495.3,1458.2 L1498.0,1465.2 L1492.5,1473.7 L1503.7,1473.7 L1523.4,1482.0 L1540.3,1493.3 L1551.5,1507.4 L1565.6,1518.6 L1576.8,1532.7 L1588.0,1541.0 L1599.3,1552.4 L1610.6,1560.8 L1621.8,1569.3 L1633.0,1584.0Z" fill="#a3a49f" />
<path d="M1690.0,1132.5 L1682.0,1135.0 L1663.0,1135.0 L1648.6,1131.3 L1629.5,1130.0 L1612.7,1137.3 L1598.4,1142.0 L1580.5,1156.4 L1586.4,1170.8 L1580.5,1182.7 L1584.0,1186.0 L1592.3,1189.6 L1593.7,1200.9 L1590.9,1215.0 L1578.2,1217.7 L1582.5,1240.2 L1588.0,1265.6 L1599.3,1288.0 L1616.2,1307.7 L1638.7,1327.4 L1661.2,1344.3 L1678.0,1352.7 L1690.0,1361.0Z" fill="#a3a49f" />
<path d="M919.0,416.9 L933.8,421.0 L949.7,421.6 L955.0,418.5 L968.6,419.0 L958.0,422.7 L947.6,424.3 L940.2,428.5 L919.0,428.5 L907.5,428.0Z" fill="#a3a49f" />
<path d="M940.2,428.5 L951.8,434.8 L959.2,437.0 L962.8,443.3 L951.8,447.5 L944.0,441.0 L936.0,434.0 L933.8,428.5Z" fill="#a3a49f" />
<path d="M908.1,446.4 L917.0,444.3 L923.3,447.5 L931.7,452.7 L938.0,453.8 L941.2,446.0 L951.8,447.5 L944.0,441.0 L936.0,440.0 L930.0,446.0 L921.0,441.0 L913.0,439.0 L905.0,441.0Z" fill="#a3a49f" />
<path d="M927.5,453.8 L938.0,454.3 L944.4,458.0 L927.5,459.0Z" fill="#a3a49f" />
<path d="M1021.4,329.3 L1025.6,323.0 L1039.3,323.0 L1033.0,328.3 L1028.8,329.3 L1029.8,333.5 L1024.6,334.6Z" fill="#a3a49f" />
<path d="M1336.0,884.0 L1344.0,887.9 L1353.8,897.7 L1365.6,905.6 L1381.4,913.5 L1385.3,917.4 L1373.5,918.4 L1361.7,911.5 L1351.9,901.7 L1342.0,893.8Z" fill="#a9aaa5" />
<path d="M1325.3,890.8 L1334.1,891.8 L1338.0,897.7 L1325.3,896.7Z" fill="#a9aaa5" />
<path d="M1109.7,1049.3 L1115.6,1039.5 L1125.4,1033.6 L1139.2,1030.6 L1155.0,1033.6 L1165.8,1037.5 L1158.9,1040.5 L1147.1,1037.5 L1137.3,1038.5 L1127.4,1043.4 L1119.5,1047.4 L1113.6,1055.2Z" fill="#a9aaa5" />
<path d="M1149.0,994.2 L1172.7,975.5 L1174.7,978.4 L1155.0,995.2Z" fill="#a9aaa5" />
<path d="M1277.0,969.6 L1297.7,974.5 L1298.7,978.4 L1278.0,973.5Z" fill="#a9aaa5" />
<path d="M1298.7,941.0 L1314.5,947.9 L1312.5,949.9 L1300.7,945.0Z" fill="#a9aaa5" />
<path d="M1308.5,1070.0 L1312.5,1071.0 L1306.6,1086.7 L1298.7,1096.6 L1296.7,1108.4 L1292.8,1094.6 L1301.7,1088.7Z" fill="#a9aaa5" />
<path d="M1355.8,1069.0 L1351.9,1084.8 L1344.0,1092.6 L1338.0,1098.5 L1346.0,1086.7 L1349.9,1076.9Z" fill="#a9aaa5" />
<path d="M1472.0,1101.5 L1464.0,1122.2 L1460.2,1143.8 L1446.4,1139.9 L1456.2,1122.2Z" fill="#a9aaa5" />
<path d="M1411.0,1106.4 L1412.9,1116.3 L1410.0,1119.2Z" fill="#a9aaa5" />
</g><g id="islands">
<path d="M316.5,323.0 L311.7,332.5 L297.5,346.7 L275.3,359.4 L265.8,367.3 L240.5,373.6 L232.6,384.7 L221.5,391.0 L235.8,397.4 L237.3,405.3 L229.4,411.6 L243.7,425.8 L253.2,425.8 L269.0,416.4 L289.6,413.2 L295.9,403.7 L295.9,413.2 L310.0,418.0 L299.0,424.3 L300.6,432.2 L311.7,433.8 L326.0,425.8 L335.4,430.6 L354.4,448.0 L370.3,457.5 L384.5,467.0 L403.5,467.0 L397.2,474.9 L384.5,478.0 L354.4,471.7 L332.3,472.4 L305.4,478.0 L303.8,493.9 L294.3,500.2 L283.2,500.2 L280.0,525.5 L262.7,544.5 L245.3,560.3 L242.0,573.0 L234.2,582.5 L221.5,593.6 L210.4,598.3 L202.5,600.0 L191.5,607.8 L191.5,615.7 L196.2,617.3 L208.9,607.8 L221.5,612.6 L231.0,626.8 L240.5,618.9 L234.2,611.0 L243.7,603.0 L243.7,596.7 L261.0,593.6 L262.7,585.7 L272.2,582.5 L310.0,584.0 L329.0,585.7 L340.2,596.7 L349.7,596.7 L351.3,587.2 L360.8,579.3 L357.6,569.8 L363.9,550.8 L379.7,541.4 L408.2,535.0 L441.5,550.8 L443.0,547.7 L481.0,549.3 L477.8,538.2 L519.0,533.4 L525.3,525.5 L544.3,528.7 L552.2,524.0 L560.0,528.3 L572.7,531.9 L601.0,524.0 L623.0,525.5 L651.8,533.4 L672.3,522.4 L693.0,512.9 L708.7,509.7 L708.7,497.0 L726.0,489.7 L740.8,475.0 L738.6,462.2 L742.9,456.0 L709.0,455.5 L696.5,458.0 L700.7,452.0 L686.0,445.4 L674.3,451.0 L662.7,446.4 L641.6,438.0 L650.0,440.0 L662.7,444.3 L675.4,434.8 L696.5,424.3 L686.6,427.4 L707.0,419.5 L705.6,410.0 L718.2,402.0 L708.7,399.0 L724.6,391.0 L737.2,383.0 L730.9,381.5 L749.9,367.3 L757.8,354.6 L762.5,342.0 L767.3,323.0Z" fill="#e8e8e5" />
<path d="M0.0,323.0 L144.0,323.0 L136.0,335.7 L142.4,345.2 L106.0,349.9 L98.0,357.8 L95.0,348.3 L83.9,359.4 L57.0,361.0 L44.3,370.5 L47.5,376.8 L34.8,381.5 L22.2,391.0 L11.0,397.4 L0.0,403.7Z" fill="#e8e8e5" />
<path d="M511.0,541.4 L531.6,530.3 L549.0,538.2 L542.7,549.3 L531.6,552.4 L522.0,546.0Z" fill="#e8e8e5" />
<path d="M382.0,932.7 L393.0,936.0 L393.0,940.6 L382.0,937.5Z" fill="#e5e4e0" />
<path d="M1354.7,1411.8 L1363.0,1411.2 L1366.0,1428.7 L1364.5,1442.7 L1370.0,1459.6 L1371.5,1487.7 L1368.7,1507.4 L1363.0,1527.0 L1357.5,1546.8 L1351.9,1560.8 L1346.2,1572.0 L1343.4,1577.7 L1337.8,1572.0 L1332.2,1560.8 L1323.7,1549.6 L1318.0,1546.8 L1315.3,1535.5 L1304.0,1524.3 L1308.3,1515.8 L1299.8,1511.6 L1304.0,1501.8 L1295.6,1493.3 L1302.6,1484.9 L1294.2,1477.9 L1302.6,1468.0 L1306.9,1458.2 L1326.5,1451.2 L1340.6,1440.0 L1353.3,1437.0Z" fill="#e5e4e0" />
<path d="M1413.7,1432.9 L1439.0,1428.7 L1436.2,1434.3 L1439.0,1441.3 L1432.0,1437.0 L1418.0,1440.0Z" fill="#e5e4e0" />
<path d="M1690.0,1140.0 L1679.0,1141.0 L1677.0,1152.0 L1682.0,1165.0 L1680.0,1178.0 L1690.0,1180.0Z" fill="#e5e4e0" />
</g>
<g clip-path="url(#gbclip)"><g fill="#eeedeb" fill-opacity="0.5" filter="url(#blur3)" ><path d="M584,546 L570,558 L520,563 L534,535 L562,516Z"/><path d="M447,379 L442,384 L440,393 L424,385 L408,372 L411,366 L433,362 L448,363Z"/><path d="M611,609 L607,616 L597,626 L581,625 L574,611 L581,598 L591,595 L606,604Z"/><path d="M798,322 L782,348 L757,345 L717,349 L714,322 L757,298 L773,312Z"/><path d="M526,556 L511,570 L477,558 L477,543 L502,537Z"/><path d="M626,353 L611,362 L595,368 L581,361 L589,344 L599,337 L614,335Z"/><path d="M310,612 L284,638 L253,636 L261,604 L288,599Z"/><path d="M479,364 L454,388 L426,387 L405,370 L428,331 L462,344Z"/><path d="M421,350 L421,363 L389,369 L375,360 L364,340 L392,334 L420,337Z"/><path d="M775,418 L767,441 L727,445 L709,422 L726,406 L769,405Z"/><path d="M438,580 L420,587 L389,607 L368,594 L354,569 L360,556 L402,544 L428,553Z"/><path d="M665,513 L654,527 L625,524 L624,497 L645,494Z"/><path d="M283,607 L280,620 L262,621 L252,615 L246,611 L252,604 L267,598 L274,597Z"/><path d="M288,482 L282,500 L244,510 L229,493 L219,476 L243,468 L274,456Z"/><path d="M598,437 L599,457 L573,455 L557,446 L557,425 L579,411 L593,425Z"/><path d="M773,473 L765,477 L764,482 L747,475 L748,473 L747,463 L760,462 L767,465Z"/><path d="M502,575 L493,587 L473,584 L461,577 L461,568 L471,559 L492,563Z"/><path d="M643,499 L635,509 L614,506 L613,490 L634,485Z"/><path d="M602,580 L584,593 L566,593 L554,597 L539,577 L553,567 L564,558 L602,565Z"/><path d="M529,447 L509,463 L494,460 L491,436 L512,442Z"/><path d="M707,384 L681,404 L654,399 L647,378 L681,373Z"/><path d="M443,340 L421,356 L394,361 L395,334 L432,321Z"/><path d="M320,411 L307,428 L275,440 L254,418 L246,404 L276,392 L309,391Z"/><path d="M284,521 L262,543 L225,527 L218,506 L260,492Z"/><path d="M782,443 L752,465 L720,467 L711,447 L728,426 L758,435Z"/><path d="M657,428 L635,449 L601,456 L591,437 L585,426 L590,403 L638,408Z"/><path d="M218,462 L210,471 L193,482 L183,474 L171,467 L184,448 L192,443 L219,448Z"/><path d="M423,340 L399,361 L354,357 L363,330 L383,327Z"/><path d="M374,350 L359,359 L345,379 L300,368 L303,350 L296,333 L336,326 L356,329Z"/><path d="M617,379 L596,385 L564,393 L557,358 L589,358Z"/></g><g fill="none" stroke="#cdcfd1" stroke-linecap="round" stroke-linejoin="round" ><path d="M433,445 C437,444 452,439 460,437 C468,435 473,432 481,433 C490,433 503,439 511,441 C519,443 521,446 528,446 C534,447 542,446 549,445 C556,445 563,445 570,444 C577,444 584,442 591,441 C598,441 609,441 612,441" stroke-width="2.6"/><path d="M591,441 C592,444 592,453 595,458 C599,463 606,467 612,469 C618,470 626,468 633,466 C640,465 649,463 652,458 C656,453 654,443 654,437 C654,431 656,426 652,422 C649,419 640,417 633,416 C626,415 618,414 612,416 C606,417 599,420 595,424 C592,428 592,438 591,441" stroke-width="2.6"/><path d="M602,416 C601,411 600,394 597,386 C594,379 587,376 583,372 C578,367 574,366 570,361 C566,356 564,348 559,344 C555,340 550,339 545,336 C539,332 530,325 528,323" stroke-width="2.6"/><path d="M643,353 C644,358 646,375 648,386 C650,398 651,416 652,422" stroke-width="2.6"/><path d="M591,433 C586,430 567,421 559,416 C552,411 550,408 547,403 C544,398 544,393 540,386 C537,380 533,372 528,365 C522,358 512,350 507,344 C501,338 500,335 494,331 C488,328 476,324 473,323" stroke-width="2.6"/><path d="M591,454 C587,456 573,461 566,464 C558,468 549,471 545,475 C540,479 540,481 536,488 C533,494 526,509 523,513" stroke-width="2.6"/><path d="M621,469 C621,472 622,483 623,492 C623,501 623,518 623,523" stroke-width="2.6"/><path d="M652,458 C656,459 668,463 675,466 C683,470 689,475 696,479 C703,483 711,488 718,490 C725,492 735,491 739,492" stroke-width="2.6"/><path d="M652,450 C656,450 668,452 675,454 C683,455 693,457 696,458" stroke-width="2.6"/><path d="M433,445 C431,447 427,454 422,458 C418,462 410,465 405,471 C401,476 401,485 397,492 C393,498 383,506 380,509" stroke-width="2.6"/><path d="M433,445 C435,441 439,432 443,424 C448,416 456,406 460,397 C464,388 466,380 466,372 C467,363 463,352 464,344 C466,336 473,327 475,323" stroke-width="2.6"/><path d="M654,437 C658,435 668,428 675,424 C682,420 689,418 696,412 C703,405 714,391 718,386" stroke-width="2.6"/><path d="M643,353 C638,352 621,350 612,348 C603,347 594,345 591,344" stroke-width="2.6"/><path d="M616,416 L616,376" stroke-width="2.6"/><path d="M523,513 C528,514 538,519 549,521 C560,523 579,525 591,526 C603,526 617,524 623,523" stroke-width="2.6"/><path d="M380,509 C375,511 359,519 348,526 C338,532 323,538 317,547 C310,555 311,571 310,576" stroke-width="2.6"/><path d="M433,445 C429,444 419,442 412,441 C404,441 392,441 388,441" stroke-width="2.6"/></g></g>
<g stroke="#ffffff" stroke-opacity="0.22" stroke-width="1">
<path d="M197.5,323V1584"/>
<path d="M632,323V1584"/>
<path d="M1066.5,323V1584"/>
<path d="M1501,323V1584"/>
<path d="M0,751.5H1690"/>
<path d="M0,1186H1690"/>
</g>
<g id="borders">
<path d="M829.0,490.7 L833.7,509.7 L838.5,520.8 L848.0,531.9 L855.9,535.0 L873.3,528.7 L879.6,541.4 L892.3,557.2 L911.3,563.5 L917.6,582.5 L939.7,579.3 L955.6,592.0 L952.4,607.8 L958.7,609.4 L952.4,623.6 L974.6,630.0 L999.9,614.0 L1009.4,604.6 L1003.0,623.6 L1009.4,639.5 L1012.5,647.4 L1034.7,652.0 L1044.2,668.0 L1053.7,680.6 L1066.3,677.4 L1083.0,678.0" fill="none" stroke="#777" stroke-width="1.5" stroke-linejoin="round" stroke-linecap="round" />
<path d="M898.5,457.3 L891.8,455.0 L898.5,464.0 L921.0,459.5 L936.8,473.0 L959.3,455.0 L970.5,441.5 L988.5,448.3 L1006.5,443.8 L1020.0,432.5 L1029.0,455.0 L1042.5,468.5 L1083.0,479.8 L1085.3,491.0 L1074.0,509.0 L1069.5,524.8 L1096.5,522.5 L1101.0,506.8 L1087.5,497.8 L1094.3,475.3 L1110.0,466.3 L1105.5,446.0 L1114.5,432.5 L1096.5,405.5 L1105.5,394.3 L1146.0,387.5 L1161.8,376.3 L1150.5,365.0 L1168.5,347.0 L1177.5,333.5 L1170.8,323.0" fill="none" stroke="#777" stroke-width="1.5" stroke-linejoin="round" stroke-linecap="round" />
<path d="M1096.5,522.5 L1110.0,540.5 L1114.5,558.5 L1125.8,576.5 L1121.3,596.8 L1105.5,603.5 L1092.0,601.3 L1085.3,626.0 L1076.3,635.0 L1085.3,655.3 L1083.0,678.0" fill="none" stroke="#777" stroke-width="1.5" stroke-linejoin="round" stroke-linecap="round" />
<path d="M1076.3,635.0 L1060.0,640.0 L1046.0,655.0 L1044.2,668.0" fill="none" stroke="#777" stroke-width="1.5" stroke-linejoin="round" stroke-linecap="round" />
<path d="M1083.0,678.0 L1105.5,680.0 L1128.0,693.5 L1150.5,716.0 L1164.0,722.8 L1182.0,720.5 L1200.0,727.3 L1222.5,731.8 L1245.0,736.3 L1267.5,745.3 L1254.0,770.0 L1236.0,792.5 L1227.0,828.5 L1218.0,860.0 L1215.8,887.0 L1220.3,907.3" fill="none" stroke="#777" stroke-width="1.5" stroke-linejoin="round" stroke-linecap="round" />
<path d="M1220.0,907.0 L1236.0,905.0 L1263.0,900.5 L1285.5,896.0 L1299.0,882.5 L1317.0,891.5 L1326.0,897.0" fill="none" stroke="#777" stroke-width="1.5" stroke-linejoin="round" stroke-linecap="round" />
<path d="M1385.6,913.8 L1390.4,906.6 L1404.7,915.0 L1414.3,922.0 L1412.0,929.3 L1422.7,929.3 L1420.3,941.3 L1433.4,936.5 L1441.8,919.8 L1439.4,907.8 L1452.6,911.4 L1471.7,913.8 L1481.3,923.4 L1483.6,928.0 L1500.4,925.7 L1512.3,917.4 L1529.0,913.8 L1533.8,906.6 L1560.0,903.0 L1574.5,901.8 L1573.3,891.0 L1580.5,890.0 L1581.7,894.7 L1598.4,899.4 L1609.2,895.9 L1621.0,898.3 L1622.3,905.4 L1637.8,919.8 L1646.2,905.4 L1641.4,891.0 L1631.9,890.0 L1636.6,879.0" fill="none" stroke="#777" stroke-width="1.5" stroke-linejoin="round" stroke-linecap="round" />
<path d="M1377.0,915.0 L1370.0,930.0 L1368.9,943.7 L1395.2,972.4 L1402.4,981.9 L1421.5,990.3 L1423.9,981.9 L1433.4,974.7 L1443.0,979.5 L1443.0,991.5 L1459.7,987.9 L1464.5,998.7 L1488.4,999.9 L1493.2,979.5 L1514.7,975.9 L1519.5,972.4 L1541.0,977.0 L1574.5,964.0 L1579.3,965.2 L1570.9,978.3 L1584.0,989.0 L1586.4,998.7 L1605.6,1011.8 L1624.7,1017.8 L1655.8,1022.6 L1672.5,1022.6 L1690.0,1030.0" fill="none" stroke="#777" stroke-width="1.5" stroke-linejoin="round" stroke-linecap="round" />
<path d="M1443.0,991.5 L1435.8,1003.4 L1443.0,1017.8 L1440.6,1026.0 L1426.3,1022.6 L1422.7,1015.4 L1409.5,1020.2 L1409.5,1037.0 L1419.0,1041.7 L1413.0,1051.3 L1419.0,1058.4 L1409.5,1059.6 L1404.7,1044.0 L1385.6,1048.9 L1383.2,1053.6 L1368.9,1048.9 L1364.0,1037.0 L1360.5,1029.7 L1349.8,1031.0 L1347.4,1041.7 L1352.2,1048.9 L1337.8,1075.0 L1328.3,1084.7 L1334.2,1099.0 L1323.5,1103.8 L1313.9,1084.7 L1304.3,1070.4 L1290.0,1058.4 L1281.6,1037.4 L1261.2,1048.7 L1247.6,1075.9 L1216.0,1085.0 L1184.0,1089.5 L1175.0,1094.0" fill="none" stroke="#777" stroke-width="1.5" stroke-linejoin="round" stroke-linecap="round" />
<path d="M1220.0,907.0 L1200.0,918.6 L1177.5,918.6 L1164.0,941.0 L1157.0,958.0 L1134.4,985.3 L1120.8,1008.0 L1102.7,1026.0 L1111.7,1044.0 L1107.2,1062.3 L1116.0,1054.0" fill="none" stroke="#777" stroke-width="1.5" stroke-linejoin="round" stroke-linecap="round" />
<path d="M1165.0,1040.0 L1163.8,1057.8 L1157.0,1066.8 L1175.0,1094.0" fill="none" stroke="#777" stroke-width="1.5" stroke-linejoin="round" stroke-linecap="round" />
<path d="M1175.0,1094.0 L1157.0,1107.6 L1170.6,1125.7 L1175.0,1143.8 L1188.7,1152.9 L1179.7,1175.5 L1148.0,1184.6 L1152.5,1207.2 L1175.0,1216.3 L1177.4,1229.9 L1163.8,1248.0 L1170.6,1275.0 L1197.8,1288.7 L1227.2,1286.5 L1225.0,1302.3 L1213.7,1320.4" fill="none" stroke="#777" stroke-width="1.5" stroke-linejoin="round" stroke-linecap="round" />
<path d="M514.0,1377.0 L534.4,1386.0 L552.5,1411.0 L570.7,1415.5 L588.8,1433.7 L625.0,1442.7 L652.0,1438.2 L679.3,1442.7 L683.9,1426.9 L700.0,1431.5 L716.9,1434.3 L731.0,1442.8 L742.0,1448.4 L784.4,1473.7 L790.0,1479.4 L809.7,1471.0 L826.6,1480.8 L837.8,1479.4 L840.6,1471.0 L857.5,1466.7 L877.2,1471.0" fill="none" stroke="#777" stroke-width="1.5" stroke-linejoin="round" stroke-linecap="round" />
<path d="M1689.6,533.8 L1679.7,538.0 L1677.0,546.4 L1667.0,545.0 L1664.3,552.0 L1655.8,550.6 L1653.0,560.5 L1640.4,563.3 L1634.7,571.7 L1623.5,567.5 L1615.0,574.5 L1599.6,576.0 L1587.0,590.0 L1584.0,601.3 L1577.0,587.2 L1568.6,584.4 L1572.8,590.0 L1567.2,592.8 L1577.0,611.0 L1589.7,618.0 L1599.6,626.6 L1598.2,635.0 L1602.4,637.8 L1592.5,653.3 L1603.8,666.0 L1606.6,680.0 L1617.8,694.0 L1629.0,702.5 L1640.4,708.2 L1654.4,725.0 L1667.0,733.5 L1671.3,744.7 L1677.0,749.0 L1682.5,747.5 L1689.6,756.0" fill="none" stroke="#777" stroke-width="1.5" stroke-linejoin="round" stroke-linecap="round" />
<path d="M1689.6,798.2 L1677.0,791.0 L1671.3,795.4 L1671.3,809.4 L1660.0,817.9 L1643.2,826.3 L1629.0,836.0 L1619.3,846.0 L1623.5,854.4 L1630.0,865.0 L1636.6,879.0" fill="none" stroke="#777" stroke-width="1.5" stroke-linejoin="round" stroke-linecap="round" />
<path d="M0.0,1535.3 L9.1,1535.0 L14.8,1529.7 L20.4,1528.3 L22.2,1524.0 L23.2,1532.2 L26.0,1528.0 L36.6,1526.2 L45.0,1529.0 L44.0,1534.0 L50.6,1532.5 L53.4,1529.7 L57.0,1531.0 L58.4,1536.0 L61.2,1531.8 L66.0,1532.5 L75.6,1529.0 L77.4,1518.5 L80.9,1517.8 L85.0,1521.3 L92.0,1519.2 L94.2,1522.0 L104.8,1522.0 L105.5,1517.0 L108.3,1517.0 L112.5,1522.3 L119.5,1522.3 L123.4,1519.9 L126.6,1522.0 L124.8,1527.6 L128.7,1529.7 L127.3,1536.7 L125.9,1543.8 L128.7,1551.5 L133.6,1548.7 L140.6,1549.4 L146.3,1552.2 L150.0,1557.0 L150.0,1564.9 L144.0,1574.0 L135.7,1584.0" fill="none" stroke="#777" stroke-width="1.5" stroke-linejoin="round" stroke-linecap="round" />
<path d="M0.0,1508.6 L6.7,1508.3 L7.4,1513.5 L3.5,1517.0 L0.0,1519.0" fill="none" stroke="#777" stroke-width="1.5" stroke-linejoin="round" stroke-linecap="round" />
</g>
<g id="cities">
<circle cx="642.5" cy="352.4" r="4.3" fill="#fff" stroke="#222" stroke-width="1.5"/>
<circle cx="622.3" cy="438.3" r="5.6" fill="#fff" stroke="#111" stroke-width="1.7"/><circle cx="622.3" cy="438.3" r="2.5" fill="#111"/>
<circle cx="432" cy="445" r="4.3" fill="#fff" stroke="#222" stroke-width="1.5"/>
<circle cx="387.4" cy="441.5" r="4.3" fill="#fff" stroke="#222" stroke-width="1.5"/>
<circle cx="523.3" cy="512.6" r="4.3" fill="#fff" stroke="#222" stroke-width="1.5"/>
<circle cx="621.8" cy="523.4" r="4.3" fill="#fff" stroke="#222" stroke-width="1.5"/>
<circle cx="311.8" cy="577.8" r="4.3" fill="#fff" stroke="#222" stroke-width="1.5"/>
<circle cx="285.7" cy="813.6" r="4.3" fill="#fff" stroke="#222" stroke-width="1.5"/>
<circle cx="502.6" cy="845.6" r="4.3" fill="#fff" stroke="#222" stroke-width="1.5"/>
<circle cx="979" cy="386.2" r="4.3" fill="#fff" stroke="#222" stroke-width="1.5"/>
<circle cx="1210" cy="437.5" r="4.3" fill="#fff" stroke="#222" stroke-width="1.5"/>
<circle cx="1174.4" cy="444.7" r="4.3" fill="#fff" stroke="#222" stroke-width="1.5"/>
<circle cx="1156.4" cy="473" r="4.3" fill="#fff" stroke="#222" stroke-width="1.5"/>
<circle cx="972.8" cy="474" r="4.3" fill="#fff" stroke="#222" stroke-width="1.5"/>
<circle cx="969.6" cy="519.8" r="5.6" fill="#fff" stroke="#111" stroke-width="1.7"/><circle cx="969.6" cy="519.8" r="2.5" fill="#111"/>
<circle cx="1170.8" cy="508.6" r="4.3" fill="#fff" stroke="#222" stroke-width="1.5"/>
<circle cx="868.4" cy="546" r="4.3" fill="#fff" stroke="#222" stroke-width="1.5"/>
<circle cx="1588.9" cy="459.5" r="4.3" fill="#fff" stroke="#222" stroke-width="1.5"/>
<circle cx="1446.2" cy="342.5" r="4.3" fill="#fff" stroke="#222" stroke-width="1.5"/>
<circle cx="1385" cy="329" r="4.3" fill="#fff" stroke="#222" stroke-width="1.5"/>
<circle cx="1011" cy="330" r="5.6" fill="#fff" stroke="#111" stroke-width="1.7"/><circle cx="1011" cy="330" r="2.5" fill="#111"/>
<circle cx="1303.5" cy="609.4" r="4.3" fill="#fff" stroke="#222" stroke-width="1.5"/>
<circle cx="1286.9" cy="684" r="4.3" fill="#fff" stroke="#222" stroke-width="1.5"/>
<circle cx="1488.5" cy="688.6" r="4.3" fill="#fff" stroke="#222" stroke-width="1.5"/>
<circle cx="1282" cy="741.7" r="4.3" fill="#fff" stroke="#222" stroke-width="1.5"/>
<circle cx="1342.2" cy="768.7" r="4.3" fill="#fff" stroke="#222" stroke-width="1.5"/>
<circle cx="1232" cy="792.5" r="4.3" fill="#fff" stroke="#222" stroke-width="1.5"/>
<circle cx="1475" cy="816.4" r="4.3" fill="#fff" stroke="#222" stroke-width="1.5"/>
<circle cx="1528" cy="843.4" r="4.3" fill="#fff" stroke="#222" stroke-width="1.5"/>
<circle cx="1642" cy="880.7" r="4.3" fill="#fff" stroke="#222" stroke-width="1.5"/>
<circle cx="1021.8" cy="936.5" r="4.3" fill="#fff" stroke="#222" stroke-width="1.5"/>
<circle cx="1219.4" cy="909" r="4.3" fill="#fff" stroke="#222" stroke-width="1.5"/>
<circle cx="1292.7" cy="930.7" r="4.3" fill="#fff" stroke="#222" stroke-width="1.5"/>
<circle cx="543" cy="1068.6" r="4.3" fill="#fff" stroke="#222" stroke-width="1.5"/>
<circle cx="729.6" cy="1104" r="4.3" fill="#fff" stroke="#222" stroke-width="1.5"/>
<circle cx="743.7" cy="1347" r="4.3" fill="#fff" stroke="#222" stroke-width="1.5"/>
<circle cx="194.7" cy="1354.4" r="4.3" fill="#fff" stroke="#222" stroke-width="1.5"/>
<circle cx="180.3" cy="1372.5" r="4.3" fill="#fff" stroke="#222" stroke-width="1.5"/>
<circle cx="405.3" cy="1383.8" r="4.3" fill="#fff" stroke="#222" stroke-width="1.5"/>
<circle cx="479.6" cy="1377.5" r="4.3" fill="#fff" stroke="#222" stroke-width="1.5"/>
<circle cx="505" cy="1431.4" r="4.3" fill="#fff" stroke="#222" stroke-width="1.5"/>
<circle cx="425.7" cy="1426.9" r="4.3" fill="#fff" stroke="#222" stroke-width="1.5"/>
<circle cx="201.5" cy="1453.6" r="4.3" fill="#fff" stroke="#222" stroke-width="1.5"/>
<circle cx="266.8" cy="1552.8" r="4.3" fill="#fff" stroke="#222" stroke-width="1.5"/>
<circle cx="563.4" cy="1552.8" r="4.3" fill="#fff" stroke="#222" stroke-width="1.5"/>
<circle cx="1107.2" cy="1063.2" r="4.3" fill="#fff" stroke="#222" stroke-width="1.5"/>
<circle cx="1006.2" cy="1112" r="4.3" fill="#fff" stroke="#222" stroke-width="1.5"/>
<circle cx="870.8" cy="1111.2" r="4.3" fill="#fff" stroke="#222" stroke-width="1.5"/>
<circle cx="1075" cy="1175.5" r="4.3" fill="#fff" stroke="#222" stroke-width="1.5"/>
<circle cx="1342.7" cy="1145.2" r="4.3" fill="#fff" stroke="#222" stroke-width="1.5"/>
<circle cx="1481.8" cy="1148.3" r="4.3" fill="#fff" stroke="#222" stroke-width="1.5"/>
<circle cx="1585" cy="1148.3" r="4.3" fill="#fff" stroke="#222" stroke-width="1.5"/>
<circle cx="1551" cy="1151.5" r="4.3" fill="#fff" stroke="#222" stroke-width="1.5"/>
<circle cx="1509" cy="1251" r="4.3" fill="#fff" stroke="#222" stroke-width="1.5"/>
<circle cx="1323.7" cy="1261.6" r="4.3" fill="#fff" stroke="#222" stroke-width="1.5"/>
<circle cx="1503" cy="1329" r="4.3" fill="#fff" stroke="#222" stroke-width="1.5"/>
<circle cx="932" cy="1346.3" r="4.3" fill="#fff" stroke="#222" stroke-width="1.5"/>
<circle cx="1047.9" cy="1379.8" r="4.3" fill="#fff" stroke="#222" stroke-width="1.5"/>
<circle cx="851" cy="1518.7" r="4.3" fill="#fff" stroke="#222" stroke-width="1.5"/>
<g transform="translate(642.0,342.8) scale(1.0,1)"><text text-anchor="middle" font-size="18.1" font-weight="400" fill="#333" stroke="#fff" stroke-opacity="0.92" stroke-width="3.6" stroke-linejoin="round" paint-order="stroke fill">Cambridge</text></g>
<g transform="translate(621.8,425.9) scale(1.045,1)"><text text-anchor="middle" font-size="23" font-weight="400" fill="#222" stroke="#fff" stroke-opacity="0.92" stroke-width="4" stroke-linejoin="round" paint-order="stroke fill">Londres</text><text text-anchor="middle" font-size="23" fill="#222" stroke="#222" stroke-width="0.55">Londres</text></g>
<g transform="translate(432.0,435.1) scale(1.0,1)"><text text-anchor="middle" font-size="18.1" font-weight="400" fill="#333" stroke="#fff" stroke-opacity="0.92" stroke-width="3.6" stroke-linejoin="round" paint-order="stroke fill">Bristol</text></g>
<g transform="translate(387.0,464.2) scale(1.0,1)"><text text-anchor="middle" font-size="18.1" font-weight="400" fill="#333" stroke="#fff" stroke-opacity="0.92" stroke-width="3.6" stroke-linejoin="round" paint-order="stroke fill">Cardiff</text></g>
<g transform="translate(523.3,502.6) scale(1.0,1)"><text text-anchor="middle" font-size="18.1" font-weight="400" fill="#333" stroke="#fff" stroke-opacity="0.92" stroke-width="3.6" stroke-linejoin="round" paint-order="stroke fill">Southampton</text></g>
<g transform="translate(621.4,513.4) scale(1.0,1)"><text text-anchor="middle" font-size="18.1" font-weight="400" fill="#333" stroke="#fff" stroke-opacity="0.92" stroke-width="3.6" stroke-linejoin="round" paint-order="stroke fill">Brighton</text></g>
<g transform="translate(311.4,568.2) scale(1.0,1)"><text text-anchor="middle" font-size="18.1" font-weight="400" fill="#333" stroke="#fff" stroke-opacity="0.92" stroke-width="3.6" stroke-linejoin="round" paint-order="stroke fill">Plymouth</text></g>
<g transform="translate(432.0,696.7) scale(0.957,1)"><text text-anchor="middle" font-size="25.2" font-weight="700" fill="#1a1a1a" stroke="#fff" stroke-opacity="0.92" stroke-width="4.5" stroke-linejoin="round" paint-order="stroke fill">Guernesey</text></g>
<g transform="translate(468.0,726.0) scale(0.957,1)"><text text-anchor="middle" font-size="25.2" font-weight="700" fill="#1a1a1a" stroke="#fff" stroke-opacity="0.92" stroke-width="4.5" stroke-linejoin="round" paint-order="stroke fill">Jersey</text></g>
<g transform="translate(285.3,803.2) scale(1.0,1)"><text text-anchor="middle" font-size="18.1" font-weight="400" fill="#333" stroke="#fff" stroke-opacity="0.92" stroke-width="3.6" stroke-linejoin="round" paint-order="stroke fill">Brest</text></g>
<g transform="translate(502.6,836.0) scale(1.0,1)"><text text-anchor="middle" font-size="18.1" font-weight="400" fill="#333" stroke="#fff" stroke-opacity="0.92" stroke-width="3.6" stroke-linejoin="round" paint-order="stroke fill">Rennes</text></g>
<g transform="translate(589.5,910.2) scale(1.0,1)"><text text-anchor="middle" font-size="18.1" font-weight="400" fill="#333" stroke="#fff" stroke-opacity="0.92" stroke-width="3.6" stroke-linejoin="round" paint-order="stroke fill">Angers</text></g>
<g transform="translate(685.3,919.2) scale(1.0,1)"><text text-anchor="middle" font-size="18.1" font-weight="400" fill="#333" stroke="#fff" stroke-opacity="0.92" stroke-width="3.6" stroke-linejoin="round" paint-order="stroke fill">Tours</text></g>
<g transform="translate(512.0,937.6) scale(1.045,1)"><text text-anchor="middle" font-size="23" font-weight="400" fill="#222" stroke="#fff" stroke-opacity="0.92" stroke-width="4" stroke-linejoin="round" paint-order="stroke fill">Nantes</text><text text-anchor="middle" font-size="23" fill="#222" stroke="#222" stroke-width="0.55">Nantes</text></g>
<g transform="translate(1077.6,387.7) scale(0.957,1)"><text text-anchor="middle" font-size="30.4" font-weight="700" fill="#1a1a1a" stroke="#fff" stroke-opacity="0.92" stroke-width="4.8" stroke-linejoin="round" paint-order="stroke fill">Pays-Bas</text></g>
<g transform="translate(978.2,414.3) scale(1.045,1)"><text text-anchor="middle" font-size="23" font-weight="400" fill="#222" stroke="#fff" stroke-opacity="0.92" stroke-width="4" stroke-linejoin="round" paint-order="stroke fill">Rotterdam</text><text text-anchor="middle" font-size="23" fill="#222" stroke="#222" stroke-width="0.55">Rotterdam</text></g>
<g transform="translate(1209.0,425.6) scale(1.045,1)"><text text-anchor="middle" font-size="23" font-weight="400" fill="#222" stroke="#fff" stroke-opacity="0.92" stroke-width="4" stroke-linejoin="round" paint-order="stroke fill">Dortmund</text><text text-anchor="middle" font-size="23" fill="#222" stroke="#222" stroke-width="0.55">Dortmund</text></g>
<g transform="translate(1134.8,452.9) scale(1.045,1)"><text text-anchor="middle" font-size="23" font-weight="400" fill="#222" stroke="#fff" stroke-opacity="0.92" stroke-width="4" stroke-linejoin="round" paint-order="stroke fill">Essen</text><text text-anchor="middle" font-size="23" fill="#222" stroke="#222" stroke-width="0.55">Essen</text></g>
<g transform="translate(1221.6,480.9) scale(1.045,1)"><text text-anchor="middle" font-size="23" font-weight="400" fill="#222" stroke="#fff" stroke-opacity="0.92" stroke-width="4" stroke-linejoin="round" paint-order="stroke fill">Düsseldorf</text><text text-anchor="middle" font-size="23" fill="#222" stroke="#222" stroke-width="0.55">Düsseldorf</text></g>
<g transform="translate(1017.8,482.3) scale(1.045,1)"><text text-anchor="middle" font-size="23" font-weight="400" fill="#222" stroke="#fff" stroke-opacity="0.92" stroke-width="4" stroke-linejoin="round" paint-order="stroke fill">Anvers</text><text text-anchor="middle" font-size="23" fill="#222" stroke="#222" stroke-width="0.55">Anvers</text></g>
<g transform="translate(969.6,507.9) scale(1.045,1)"><text text-anchor="middle" font-size="23" font-weight="400" fill="#222" stroke="#fff" stroke-opacity="0.92" stroke-width="4" stroke-linejoin="round" paint-order="stroke fill">Bruxelles</text><text text-anchor="middle" font-size="23" fill="#222" stroke="#222" stroke-width="0.55">Bruxelles</text></g>
<g transform="translate(1170.8,536.7) scale(1.045,1)"><text text-anchor="middle" font-size="23" font-weight="400" fill="#222" stroke="#fff" stroke-opacity="0.92" stroke-width="4" stroke-linejoin="round" paint-order="stroke fill">Cologne</text><text text-anchor="middle" font-size="23" fill="#222" stroke="#222" stroke-width="0.55">Cologne</text></g>
<g transform="translate(892.2,552.6) scale(1.0,1)"><text text-anchor="middle" font-size="18.1" font-weight="400" fill="#333" stroke="#fff" stroke-opacity="0.92" stroke-width="3.6" stroke-linejoin="round" paint-order="stroke fill">Lille</text></g>
<g transform="translate(993.5,573.5) scale(0.957,1)"><text text-anchor="middle" font-size="30.4" font-weight="700" fill="#1a1a1a" stroke="#fff" stroke-opacity="0.92" stroke-width="4.8" stroke-linejoin="round" paint-order="stroke fill">Belgique</text></g>
<g transform="translate(1435.0,501.5) scale(0.957,1)"><text text-anchor="middle" font-size="30.4" font-weight="700" fill="#1a1a1a" stroke="#fff" stroke-opacity="0.92" stroke-width="4.8" stroke-linejoin="round" paint-order="stroke fill">Allemagne</text></g>
<g transform="translate(1589.3,448.5) scale(1.045,1)"><text text-anchor="middle" font-size="23" font-weight="400" fill="#222" stroke="#fff" stroke-opacity="0.92" stroke-width="4" stroke-linejoin="round" paint-order="stroke fill">Leipzig</text><text text-anchor="middle" font-size="23" fill="#222" stroke="#222" stroke-width="0.55">Leipzig</text></g>
<g transform="translate(1446.7,365.8) scale(1.0,1)"><text text-anchor="middle" font-size="18.1" font-weight="400" fill="#333" stroke="#fff" stroke-opacity="0.92" stroke-width="3.6" stroke-linejoin="round" paint-order="stroke fill">Brunswick</text></g>
<g transform="translate(1304.0,597.9) scale(1.045,1)"><text text-anchor="middle" font-size="23" font-weight="400" fill="#222" stroke="#fff" stroke-opacity="0.92" stroke-width="4" stroke-linejoin="round" paint-order="stroke fill">Francfort-sur-le-Main</text><text text-anchor="middle" font-size="23" fill="#222" stroke="#222" stroke-width="0.55">Francfort-sur-le-Main</text></g>
<g transform="translate(1103.3,662.2) scale(0.957,1)"><text text-anchor="middle" font-size="30.4" font-weight="700" fill="#1a1a1a" stroke="#fff" stroke-opacity="0.92" stroke-width="4.8" stroke-linejoin="round" paint-order="stroke fill">Luxembourg</text></g>
<g transform="translate(1286.9,674.5) scale(1.0,1)"><text text-anchor="middle" font-size="18.1" font-weight="400" fill="#333" stroke="#fff" stroke-opacity="0.92" stroke-width="3.6" stroke-linejoin="round" paint-order="stroke fill">Mannheim</text></g>
<g transform="translate(1488.0,677.6) scale(1.045,1)"><text text-anchor="middle" font-size="23" font-weight="400" fill="#222" stroke="#fff" stroke-opacity="0.92" stroke-width="4" stroke-linejoin="round" paint-order="stroke fill">Nuremberg</text><text text-anchor="middle" font-size="23" fill="#222" stroke="#222" stroke-width="0.55">Nuremberg</text></g>
<g transform="translate(1282.0,731.2) scale(1.0,1)"><text text-anchor="middle" font-size="18.1" font-weight="400" fill="#333" stroke="#fff" stroke-opacity="0.92" stroke-width="3.6" stroke-linejoin="round" paint-order="stroke fill">Karlsruhe</text></g>
<g transform="translate(1341.8,757.2) scale(1.045,1)"><text text-anchor="middle" font-size="23" font-weight="400" fill="#222" stroke="#fff" stroke-opacity="0.92" stroke-width="4" stroke-linejoin="round" paint-order="stroke fill">Stuttgart</text><text text-anchor="middle" font-size="23" fill="#222" stroke="#222" stroke-width="0.55">Stuttgart</text></g>
<g transform="translate(1178.9,798.7) scale(1.0,1)"><text text-anchor="middle" font-size="18.1" font-weight="400" fill="#333" stroke="#fff" stroke-opacity="0.92" stroke-width="3.6" stroke-linejoin="round" paint-order="stroke fill">Strasbourg</text></g>
<g transform="translate(1474.6,806.8) scale(1.0,1)"><text text-anchor="middle" font-size="18.1" font-weight="400" fill="#333" stroke="#fff" stroke-opacity="0.92" stroke-width="3.6" stroke-linejoin="round" paint-order="stroke fill">Augsbourg</text></g>
<g transform="translate(1528.0,831.9) scale(1.045,1)"><text text-anchor="middle" font-size="23" font-weight="400" fill="#222" stroke="#fff" stroke-opacity="0.92" stroke-width="4" stroke-linejoin="round" paint-order="stroke fill">Munich</text><text text-anchor="middle" font-size="23" fill="#222" stroke="#222" stroke-width="0.55">Munich</text></g>
<g transform="translate(1642.0,871.2) scale(1.0,1)"><text text-anchor="middle" font-size="18.1" font-weight="400" fill="#333" stroke="#fff" stroke-opacity="0.92" stroke-width="3.6" stroke-linejoin="round" paint-order="stroke fill">Salzbourg</text></g>
<g transform="translate(1021.8,927.0) scale(1.0,1)"><text text-anchor="middle" font-size="18.1" font-weight="400" fill="#333" stroke="#fff" stroke-opacity="0.92" stroke-width="3.6" stroke-linejoin="round" paint-order="stroke fill">Dijon</text></g>
<g transform="translate(1219.0,932.4) scale(1.0,1)"><text text-anchor="middle" font-size="18.1" font-weight="400" fill="#333" stroke="#fff" stroke-opacity="0.92" stroke-width="3.6" stroke-linejoin="round" paint-order="stroke fill">Bâle</text></g>
<g transform="translate(1292.7,918.9) scale(1.045,1)"><text text-anchor="middle" font-size="23" font-weight="400" fill="#222" stroke="#fff" stroke-opacity="0.92" stroke-width="4" stroke-linejoin="round" paint-order="stroke fill">Zurich</text><text text-anchor="middle" font-size="23" fill="#222" stroke="#222" stroke-width="0.55">Zurich</text></g>
<g transform="translate(1427.6,965.0) scale(0.957,1)"><text text-anchor="middle" font-size="30.4" font-weight="700" fill="#1a1a1a" stroke="#fff" stroke-opacity="0.92" stroke-width="4.8" stroke-linejoin="round" paint-order="stroke fill">Liechtenstein</text></g>
<g transform="translate(822.0,1025.1) scale(0.957,1)"><text text-anchor="middle" font-size="30.4" font-weight="700" fill="#1a1a1a" stroke="#fff" stroke-opacity="0.92" stroke-width="4.8" stroke-linejoin="round" paint-order="stroke fill">France</text></g>
<g transform="translate(542.0,1059.0) scale(1.0,1)"><text text-anchor="middle" font-size="18.1" font-weight="400" fill="#333" stroke="#fff" stroke-opacity="0.92" stroke-width="3.6" stroke-linejoin="round" paint-order="stroke fill">La Rochelle</text></g>
<g transform="translate(729.2,1094.8) scale(1.0,1)"><text text-anchor="middle" font-size="18.1" font-weight="400" fill="#333" stroke="#fff" stroke-opacity="0.92" stroke-width="3.6" stroke-linejoin="round" paint-order="stroke fill">Limoges</text></g>
<g transform="translate(587.4,1204.2) scale(1.0,1)"><text text-anchor="middle" font-size="18.1" font-weight="400" fill="#333" stroke="#fff" stroke-opacity="0.92" stroke-width="3.6" stroke-linejoin="round" paint-order="stroke fill">Bordeaux</text></g>
<g transform="translate(743.7,1335.9) scale(1.045,1)"><text text-anchor="middle" font-size="23" font-weight="400" fill="#222" stroke="#fff" stroke-opacity="0.92" stroke-width="4" stroke-linejoin="round" paint-order="stroke fill">Toulouse</text><text text-anchor="middle" font-size="23" fill="#222" stroke="#222" stroke-width="0.55">Toulouse</text></g>
<g transform="translate(194.7,1345.2) scale(1.0,1)"><text text-anchor="middle" font-size="18.1" font-weight="400" fill="#333" stroke="#fff" stroke-opacity="0.92" stroke-width="3.6" stroke-linejoin="round" paint-order="stroke fill">Gijón</text></g>
<g transform="translate(180.3,1395.5) scale(1.0,1)"><text text-anchor="middle" font-size="18.1" font-weight="400" fill="#333" stroke="#fff" stroke-opacity="0.92" stroke-width="3.6" stroke-linejoin="round" paint-order="stroke fill">Oviedo</text></g>
<g transform="translate(405.3,1372.3) scale(1.045,1)"><text text-anchor="middle" font-size="23" font-weight="400" fill="#222" stroke="#fff" stroke-opacity="0.92" stroke-width="4" stroke-linejoin="round" paint-order="stroke fill">Bilbao</text><text text-anchor="middle" font-size="23" fill="#222" stroke="#222" stroke-width="0.55">Bilbao</text></g>
<g transform="translate(479.2,1400.5) scale(1.0,1)"><text text-anchor="middle" font-size="18.1" font-weight="400" fill="#333" stroke="#fff" stroke-opacity="0.92" stroke-width="3.6" stroke-linejoin="round" paint-order="stroke fill">Saint-Sébastien</text></g>
<g transform="translate(505.0,1421.7) scale(1.0,1)"><text text-anchor="middle" font-size="18.1" font-weight="400" fill="#333" stroke="#fff" stroke-opacity="0.92" stroke-width="3.6" stroke-linejoin="round" paint-order="stroke fill">Pampelune</text></g>
<g transform="translate(425.7,1449.2) scale(1.0,1)"><text text-anchor="middle" font-size="18.1" font-weight="400" fill="#333" stroke="#fff" stroke-opacity="0.92" stroke-width="3.6" stroke-linejoin="round" paint-order="stroke fill">Vitoria-Gasteiz</text></g>
<g transform="translate(201.5,1443.9) scale(1.0,1)"><text text-anchor="middle" font-size="18.1" font-weight="400" fill="#333" stroke="#fff" stroke-opacity="0.92" stroke-width="3.6" stroke-linejoin="round" paint-order="stroke fill">León</text></g>
<g transform="translate(754.0,1470.5) scale(0.957,1)"><text text-anchor="middle" font-size="30.4" font-weight="700" fill="#1a1a1a" stroke="#fff" stroke-opacity="0.92" stroke-width="4.8" stroke-linejoin="round" paint-order="stroke fill">Andorre</text></g>
<g transform="translate(266.3,1543.2) scale(1.0,1)"><text text-anchor="middle" font-size="18.1" font-weight="400" fill="#333" stroke="#fff" stroke-opacity="0.92" stroke-width="3.6" stroke-linejoin="round" paint-order="stroke fill">Valladolid</text></g>
<g transform="translate(563.9,1541.2) scale(1.045,1)"><text text-anchor="middle" font-size="23" font-weight="400" fill="#222" stroke="#fff" stroke-opacity="0.92" stroke-width="4" stroke-linejoin="round" paint-order="stroke fill">Saragosse</text><text text-anchor="middle" font-size="23" fill="#222" stroke="#222" stroke-width="0.55">Saragosse</text></g>
<g transform="translate(1247.6,1007.1) scale(0.957,1)"><text text-anchor="middle" font-size="30.4" font-weight="700" fill="#1a1a1a" stroke="#fff" stroke-opacity="0.92" stroke-width="4.8" stroke-linejoin="round" paint-order="stroke fill">Suisse</text></g>
<g transform="translate(1060.6,1071.5) scale(1.045,1)"><text text-anchor="middle" font-size="23" font-weight="400" fill="#222" stroke="#fff" stroke-opacity="0.92" stroke-width="4" stroke-linejoin="round" paint-order="stroke fill">Genève</text><text text-anchor="middle" font-size="23" fill="#222" stroke="#222" stroke-width="0.55">Genève</text></g>
<g transform="translate(1006.2,1100.5) scale(1.045,1)"><text text-anchor="middle" font-size="23" font-weight="400" fill="#222" stroke="#fff" stroke-opacity="0.92" stroke-width="4" stroke-linejoin="round" paint-order="stroke fill">Lyon</text><text text-anchor="middle" font-size="23" fill="#222" stroke="#222" stroke-width="0.55">Lyon</text></g>
<g transform="translate(871.0,1101.5) scale(1.0,1)"><text text-anchor="middle" font-size="18.1" font-weight="400" fill="#333" stroke="#fff" stroke-opacity="0.92" stroke-width="3.6" stroke-linejoin="round" paint-order="stroke fill">Clermont-Ferrand</text></g>
<g transform="translate(1075.0,1166.2) scale(1.0,1)"><text text-anchor="middle" font-size="18.1" font-weight="400" fill="#333" stroke="#fff" stroke-opacity="0.92" stroke-width="3.6" stroke-linejoin="round" paint-order="stroke fill">Grenoble</text></g>
<g transform="translate(1343.2,1133.6) scale(1.045,1)"><text text-anchor="middle" font-size="23" font-weight="400" fill="#222" stroke="#fff" stroke-opacity="0.92" stroke-width="4" stroke-linejoin="round" paint-order="stroke fill">Milan</text><text text-anchor="middle" font-size="23" fill="#222" stroke="#222" stroke-width="0.55">Milan</text></g>
<g transform="translate(1482.2,1138.7) scale(1.0,1)"><text text-anchor="middle" font-size="18.1" font-weight="400" fill="#333" stroke="#fff" stroke-opacity="0.92" stroke-width="3.6" stroke-linejoin="round" paint-order="stroke fill">Vérone</text></g>
<g transform="translate(1585.0,1136.8) scale(1.045,1)"><text text-anchor="middle" font-size="23" font-weight="400" fill="#222" stroke="#fff" stroke-opacity="0.92" stroke-width="4" stroke-linejoin="round" paint-order="stroke fill">Venise</text><text text-anchor="middle" font-size="23" fill="#222" stroke="#222" stroke-width="0.55">Venise</text></g>
<g transform="translate(1551.0,1174.0) scale(1.0,1)"><text text-anchor="middle" font-size="18.1" font-weight="400" fill="#333" stroke="#fff" stroke-opacity="0.92" stroke-width="3.6" stroke-linejoin="round" paint-order="stroke fill">Padoue</text></g>
<g transform="translate(1510.3,1239.9) scale(1.045,1)"><text text-anchor="middle" font-size="23" font-weight="400" fill="#222" stroke="#fff" stroke-opacity="0.92" stroke-width="4" stroke-linejoin="round" paint-order="stroke fill">Bologne</text><text text-anchor="middle" font-size="23" fill="#222" stroke="#222" stroke-width="0.55">Bologne</text></g>
<g transform="translate(1324.2,1249.9) scale(1.045,1)"><text text-anchor="middle" font-size="23" font-weight="400" fill="#222" stroke="#fff" stroke-opacity="0.92" stroke-width="4" stroke-linejoin="round" paint-order="stroke fill">Gênes</text><text text-anchor="middle" font-size="23" fill="#222" stroke="#222" stroke-width="0.55">Gênes</text></g>
<g transform="translate(1595.4,1319.7) scale(0.957,1)"><text text-anchor="middle" font-size="25.2" font-weight="700" fill="#1a1a1a" stroke="#fff" stroke-opacity="0.92" stroke-width="4.5" stroke-linejoin="round" paint-order="stroke fill">Saint-Marin</text></g>
<g transform="translate(1502.6,1356.9) scale(1.045,1)"><text text-anchor="middle" font-size="23" font-weight="400" fill="#222" stroke="#fff" stroke-opacity="0.92" stroke-width="4" stroke-linejoin="round" paint-order="stroke fill">Florence</text><text text-anchor="middle" font-size="23" fill="#222" stroke="#222" stroke-width="0.55">Florence</text></g>
<g transform="translate(1205.0,1342.7) scale(0.957,1)"><text text-anchor="middle" font-size="30.4" font-weight="700" fill="#1a1a1a" stroke="#fff" stroke-opacity="0.92" stroke-width="4.8" stroke-linejoin="round" paint-order="stroke fill">Monaco</text></g>
<g transform="translate(932.8,1335.1) scale(1.045,1)"><text text-anchor="middle" font-size="23" font-weight="400" fill="#222" stroke="#fff" stroke-opacity="0.92" stroke-width="4" stroke-linejoin="round" paint-order="stroke fill">Montpellier</text><text text-anchor="middle" font-size="23" fill="#222" stroke="#222" stroke-width="0.55">Montpellier</text></g>
<g transform="translate(1047.9,1407.9) scale(1.045,1)"><text text-anchor="middle" font-size="23" font-weight="400" fill="#222" stroke="#fff" stroke-opacity="0.92" stroke-width="4" stroke-linejoin="round" paint-order="stroke fill">Marseille</text><text text-anchor="middle" font-size="23" fill="#222" stroke="#222" stroke-width="0.55">Marseille</text></g>
<g transform="translate(1596.3,1418.3) scale(0.957,1)"><text text-anchor="middle" font-size="30.4" font-weight="700" fill="#1a1a1a" stroke="#fff" stroke-opacity="0.92" stroke-width="4.8" stroke-linejoin="round" paint-order="stroke fill">Italie</text></g>
<g transform="translate(851.0,1509.5) scale(1.0,1)"><text text-anchor="middle" font-size="18.1" font-weight="400" fill="#333" stroke="#fff" stroke-opacity="0.92" stroke-width="3.6" stroke-linejoin="round" paint-order="stroke fill">Gérone</text></g>
<g transform="translate(792.6,1565.9) scale(1.045,1)"><text text-anchor="middle" font-size="23" font-weight="400" fill="#222" stroke="#fff" stroke-opacity="0.92" stroke-width="4" stroke-linejoin="round" paint-order="stroke fill">Barcelone</text><text text-anchor="middle" font-size="23" fill="#222" stroke="#222" stroke-width="0.55">Barcelone</text></g>
<g transform="translate(97.4,1415.0) scale(1.0,1)"><text text-anchor="end" font-size="18.1" font-weight="400" fill="#333" stroke="#fff" stroke-opacity="0.92" stroke-width="3.6" stroke-linejoin="round" paint-order="stroke fill">Compostelle</text></g>
<g transform="translate(29.4,1362.9) scale(1.0,1)"><text text-anchor="end" font-size="18.1" font-weight="400" fill="#333" stroke="#fff" stroke-opacity="0.92" stroke-width="3.6" stroke-linejoin="round" paint-order="stroke fill">gne</text></g>
<circle cx="1597.9" cy="1526.5" r="5.6" fill="#fff" stroke="#111" stroke-width="1.7"/><circle cx="1597.9" cy="1526.5" r="2.5" fill="#111"/>
<g transform="translate(1657.0,483.9) scale(1.045,1)"><text text-anchor="start" font-size="23" font-weight="400" fill="#222" stroke="#fff" stroke-opacity="0.92" stroke-width="4" stroke-linejoin="round" paint-order="stroke fill">Dre</text><text text-anchor="start" font-size="23" fill="#222" stroke="#222" stroke-width="0.55">Dre</text></g>
<g transform="translate(1632.0,1131.0) scale(1.0,1)"><text text-anchor="start" font-size="18.1" font-weight="400" fill="#333" stroke="#fff" stroke-opacity="0.92" stroke-width="3.6" stroke-linejoin="round" paint-order="stroke fill">Trieste</text></g>
<g transform="translate(1606.3,1534.4) scale(1.045,1)"><text text-anchor="start" font-size="23" font-weight="400" fill="#222" stroke="#fff" stroke-opacity="0.92" stroke-width="4" stroke-linejoin="round" paint-order="stroke fill">Rome</text><text text-anchor="start" font-size="23" fill="#222" stroke="#222" stroke-width="0.55">Rome</text></g>
</g>
<g id="markers">
<circle cx="755.3" cy="546.4" r="23.8" fill="#ee4a50" fill-opacity="0.36"/>
<circle cx="810.6" cy="636.3" r="23.8" fill="#ee4a50" fill-opacity="0.36"/>
<circle cx="948" cy="824" r="23.8" fill="#ee4a50" fill-opacity="0.36"/>
<circle cx="1195.5" cy="848.8" r="23.8" fill="#ee4a50" fill-opacity="0.36"/>
<circle cx="589.9" cy="920" r="23.8" fill="#ee4a50" fill-opacity="0.36"/>
<circle cx="494.3" cy="1028.6" r="23.8" fill="#ee4a50" fill-opacity="0.36"/>
<circle cx="596.5" cy="1049.2" r="23.8" fill="#ee4a50" fill-opacity="0.36"/>
<circle cx="556.3" cy="1088.1" r="23.8" fill="#ee4a50" fill-opacity="0.36"/>
<circle cx="587" cy="1212.5" r="23.8" fill="#ee4a50" fill-opacity="0.36"/>
<circle cx="640.8" cy="1257" r="23.8" fill="#ee4a50" fill-opacity="0.36"/>
<circle cx="513.3" cy="1359" r="23.8" fill="#ee4a50" fill-opacity="0.36"/>
<circle cx="684.8000000000001" cy="931.8000000000001" r="25.6" fill="#ee5353" fill-opacity="0.9" filter="url(#blur1)"/>
<circle cx="684.86" cy="932.02" r="11" fill="none" stroke="#f6b4b0" stroke-opacity="0.8" stroke-width="1.4"/>
<circle cx="509.9" cy="947.8" r="25.6" fill="#ee5353" fill-opacity="0.9" filter="url(#blur1)"/>
<circle cx="510.19" cy="948.04" r="11" fill="none" stroke="#f6b4b0" stroke-opacity="0.8" stroke-width="1.4"/>
<circle cx="747" cy="731.7" r="23.8" fill="#ee4a50" fill-opacity="0.38"/>
<circle cx="765.3" cy="745.5" r="23.8" fill="#ee4a50" fill-opacity="0.38"/>
<circle cx="739.2" cy="772.5" r="23.8" fill="#ee4a50" fill-opacity="0.38"/>
<circle cx="747.7" cy="807" r="23.8" fill="#ee4a50" fill-opacity="0.38"/>
<circle cx="761.7" cy="761.3" r="23.8" fill="#ee4a50" fill-opacity="0.38"/>
<circle cx="778.6" cy="774" r="23.8" fill="#ee4a50" fill-opacity="0.38"/>
<circle cx="785.7" cy="777.5" r="23.8" fill="#ee4a50" fill-opacity="0.38"/>
<circle cx="805.3" cy="776.8" r="23.8" fill="#ee4a50" fill-opacity="0.38"/>
<circle cx="804" cy="759.2" r="23.8" fill="#ee4a50" fill-opacity="0.38"/>
<circle cx="821.5" cy="758.5" r="23.8" fill="#ee4a50" fill-opacity="0.38"/>
<circle cx="833.5" cy="775.3" r="23.8" fill="#ee4a50" fill-opacity="0.38"/>
<circle cx="843.3" cy="771" r="23.8" fill="#ee4a50" fill-opacity="0.38"/>
<circle cx="854.6" cy="743" r="23.8" fill="#ee4a50" fill-opacity="0.38"/>
<circle cx="851.8" cy="757" r="23.8" fill="#ee4a50" fill-opacity="0.38"/>
<circle cx="831.4" cy="744.4" r="23.8" fill="#ee4a50" fill-opacity="0.38"/>
<circle cx="836.3" cy="798.6" r="23.8" fill="#ee4a50" fill-opacity="0.38"/>
<circle cx="799" cy="807.7" r="23.8" fill="#ee4a50" fill-opacity="0.38"/>
<circle cx="832" cy="814.7" r="23.8" fill="#ee4a50" fill-opacity="0.38"/>
<circle cx="857.4" cy="814" r="23.8" fill="#ee4a50" fill-opacity="0.38"/>
<circle cx="829.3" cy="705" r="23.8" fill="#ee4a50" fill-opacity="0.38"/>
<path d="M752,740 L790,732 L815,730 L848,726 L872,746 L866,775 L860,805 L840,830 L810,808 L795,800 L765,800 L742,782 L748,758Z" fill="#ea3333" fill-opacity="0.95" filter="url(#blur6)"/>
<path d="M770,750 L850,742 L856,790 L830,812 L780,790Z" fill="#ea3333" filter="url(#blur6)"/>
<circle cx="835" cy="726" r="10" fill="#ee6a2c" fill-opacity="0.85" filter="url(#blur1)"/>
<circle cx="755.3" cy="546.4" r="10.6" fill="#cf3120" stroke="#f9dcda" stroke-opacity="0.95" stroke-width="1.7"/>
<circle cx="810.6" cy="636.3" r="10.6" fill="#cf3120" stroke="#f9dcda" stroke-opacity="0.95" stroke-width="1.7"/>
<circle cx="948" cy="824" r="10.6" fill="#cf3120" stroke="#f9dcda" stroke-opacity="0.95" stroke-width="1.7"/>
<circle cx="1195.5" cy="848.8" r="10.6" fill="#cf3120" stroke="#f9dcda" stroke-opacity="0.95" stroke-width="1.7"/>
<circle cx="589.9" cy="920" r="10.6" fill="#cf3120" stroke="#f9dcda" stroke-opacity="0.95" stroke-width="1.7"/>
<circle cx="494.3" cy="1028.6" r="10.6" fill="#cf3120" stroke="#f9dcda" stroke-opacity="0.95" stroke-width="1.7"/>
<circle cx="596.5" cy="1049.2" r="10.6" fill="#cf3120" stroke="#f9dcda" stroke-opacity="0.95" stroke-width="1.7"/>
<circle cx="556.3" cy="1088.1" r="10.6" fill="#cf3120" stroke="#f9dcda" stroke-opacity="0.95" stroke-width="1.7"/>
<circle cx="587" cy="1212.5" r="10.6" fill="#cf3120" stroke="#f9dcda" stroke-opacity="0.95" stroke-width="1.7"/>
<circle cx="640.8" cy="1257" r="10.6" fill="#cf3120" stroke="#f9dcda" stroke-opacity="0.95" stroke-width="1.7"/>
<circle cx="513.3" cy="1359" r="10.6" fill="#cf3120" stroke="#f9dcda" stroke-opacity="0.95" stroke-width="1.7"/>
<circle cx="684.2" cy="929.6" r="10.6" fill="#cf3120" stroke="#f9dcda" stroke-opacity="0.95" stroke-width="1.7"/>
<circle cx="507" cy="945.4" r="10.6" fill="#cf3120" stroke="#f9dcda" stroke-opacity="0.95" stroke-width="1.7"/>
<circle cx="747" cy="731.7" r="10.6" fill="#cf3120" stroke="#f9dcda" stroke-opacity="0.95" stroke-width="1.7"/>
<circle cx="765.3" cy="745.5" r="10.6" fill="#cf3120" stroke="#f9dcda" stroke-opacity="0.95" stroke-width="1.7"/>
<circle cx="739.2" cy="772.5" r="10.6" fill="#cf3120" stroke="#f9dcda" stroke-opacity="0.95" stroke-width="1.7"/>
<circle cx="747.7" cy="807" r="10.6" fill="#cf3120" stroke="#f9dcda" stroke-opacity="0.95" stroke-width="1.7"/>
<circle cx="761.7" cy="761.3" r="10.6" fill="#cf3120" stroke="#f9dcda" stroke-opacity="0.95" stroke-width="1.7"/>
<circle cx="778.6" cy="774" r="10.6" fill="#cf3120" stroke="#f9dcda" stroke-opacity="0.95" stroke-width="1.7"/>
<circle cx="785.7" cy="777.5" r="10.6" fill="#cf3120" stroke="#f9dcda" stroke-opacity="0.95" stroke-width="1.7"/>
<circle cx="805.3" cy="776.8" r="10.6" fill="#cf3120" stroke="#f9dcda" stroke-opacity="0.95" stroke-width="1.7"/>
<circle cx="804" cy="759.2" r="10.6" fill="#cf3120" stroke="#f9dcda" stroke-opacity="0.95" stroke-width="1.7"/>
<circle cx="821.5" cy="758.5" r="10.6" fill="#cf3120" stroke="#f9dcda" stroke-opacity="0.95" stroke-width="1.7"/>
<circle cx="833.5" cy="775.3" r="10.6" fill="#cf3120" stroke="#f9dcda" stroke-opacity="0.95" stroke-width="1.7"/>
<circle cx="843.3" cy="771" r="10.6" fill="#cf3120" stroke="#f9dcda" stroke-opacity="0.95" stroke-width="1.7"/>
<circle cx="854.6" cy="743" r="10.6" fill="#cf3120" stroke="#f9dcda" stroke-opacity="0.95" stroke-width="1.7"/>
<circle cx="851.8" cy="757" r="10.6" fill="#cf3120" stroke="#f9dcda" stroke-opacity="0.95" stroke-width="1.7"/>
<circle cx="831.4" cy="744.4" r="10.6" fill="#cf3120" stroke="#f9dcda" stroke-opacity="0.95" stroke-width="1.7"/>
<circle cx="836.3" cy="798.6" r="10.6" fill="#cf3120" stroke="#f9dcda" stroke-opacity="0.95" stroke-width="1.7"/>
<circle cx="799" cy="807.7" r="10.6" fill="#cf3120" stroke="#f9dcda" stroke-opacity="0.95" stroke-width="1.7"/>
<circle cx="832" cy="814.7" r="10.6" fill="#cf3120" stroke="#f9dcda" stroke-opacity="0.95" stroke-width="1.7"/>
<circle cx="857.4" cy="814" r="10.6" fill="#cf3120" stroke="#f9dcda" stroke-opacity="0.95" stroke-width="1.7"/>
</g>
<path d="M804.6,760.2 C798.0,749.2 782.5,743.3 782.5,721.1 A22.15,22.15 0 1 1 826.8,721.1 C826.8,743.3 811.2,749.2 804.6,760.2Z" fill="#1b2541"/>
<path d="M808.9,745.1 C802.3,734.1 786.8,728.2 786.8,706.0 A22.15,22.15 0 1 1 831.0,706.0 C831.0,728.2 815.5,734.1 808.9,745.1Z" fill="#5bc8f7"/>
<circle cx="808.6" cy="705.7" r="11" fill="#fff"/>
<path d="M1690,868.4 L1619.4,954 L1690,1038Z" fill="#fff"/>
<path d="M1675.4,954 H1644.4 M1652.4,945.6 L1643.6,954 L1652.4,962.4" fill="none" stroke="#111" stroke-width="1.7" stroke-linecap="round" stroke-linejoin="round"/>
<rect x="1606.4" y="1448" width="48.6" height="101" rx="6.5" fill="#fff"/><rect x="1608.3" y="1449.9" width="44.8" height="97.2" rx="5" fill="#1b233d"/>
<text x="1630.3" y="1490.6" font-size="40" font-weight="400" fill="#fff" stroke="#fff" stroke-width="0.9" text-anchor="middle">+</text>
<text x="1630.3" y="1538.8" font-size="48" font-weight="700" fill="#fff" text-anchor="middle">-</text>
<rect x="575" y="1559.4" width="165" height="25" fill="#f5f5f5" fill-opacity="0.72"/>
<rect x="743" y="1559.4" width="947" height="25" fill="#f5f5f5" fill-opacity="0.72"/>
<rect x="1488" y="1561" width="1.4" height="23" fill="#c9c9c9"/>
<text x="585.6" y="1575.6" font-size="17.6" fill="#111" textLength="145.4" lengthAdjust="spacingAndGlyphs">Raccourcis clavier</text>
<text x="751.8" y="1575.6" font-size="17.6" fill="#111" textLength="723.2" lengthAdjust="spacingAndGlyphs">Données cartographiques ©2022 GeoBasis-DE/BKG (©2009), Google, Inst. Geogr. Nacional</text>
<text x="1497.5" y="1575.6" font-size="17.6" fill="#111" textLength="181.5" lengthAdjust="spacingAndGlyphs">Conditions d'utilisation</text>
<text x="13" y="1570.8" font-size="34.5" font-weight="700" fill="#fff" stroke="#6e6e6e" stroke-opacity="0.4" stroke-width="1.6" paint-order="stroke fill" textLength="103" lengthAdjust="spacingAndGlyphs">Google</text>
<path d="M0,1562.5 C1,1575 7,1582 17,1584 L0,1584Z" fill="#141414"/>
</svg>
</div>

<aside id="panel" class="abs">
  <div id="phead" class="abs"></div>
  <div class="vdiv"></div>
  <div class="hdiv" style="top:737px"></div>
  <div class="hdiv" style="top:1078px"></div>
</aside>

<svg id="icons" class="abs" width="2869" height="1584" viewBox="0 0 2869 1584">
<path d="M242.4,81.2 C241.9,85.6 244,89.2 248.2,90.4" fill="none" stroke="#a4c639" stroke-width="3.3"/><path d="M243.6,80 V91 M246.4,80 V92" stroke="#1b233d" stroke-width="0.7"/>
<path d="M442.8,213.79999999999998 L458.59999999999997,229.6 M458.59999999999997,213.79999999999998 L442.8,229.6" stroke="#888888" stroke-width="3.3" fill="none"/>
<path d="M879.1,213.79999999999998 L894.9,229.6 M894.9,213.79999999999998 L879.1,229.6" stroke="#888888" stroke-width="3.3" fill="none"/>
<path d="M1481.8,213.79999999999998 L1497.6000000000001,229.6 M1497.6000000000001,213.79999999999998 L1481.8,229.6" stroke="#888888" stroke-width="3.3" fill="none"/>
<path d="M976.1,246.4 C974.1,242.0 967.9,240.4 967.9,232.6 A8.20,8.20 0 1 1 984.3,232.6 C984.3,240.4 978.1,242.0 976.1,246.4Z" fill="#1b233d"/><circle cx="976.1" cy="232.4" r="4.3" fill="#fff"/>
<path d="M1579.5,246.4 C1577.5,242.0 1571.3,240.4 1571.3,232.6 A8.20,8.20 0 1 1 1587.7,232.6 C1587.7,240.4 1581.5,242.0 1579.5,246.4Z" fill="#5cc8f6"/><circle cx="1579.5" cy="232.4" r="4.3" fill="#fff"/>
<path d="M2518,217.4 H2529.8 L2523.9,224.6Z" fill="#a2a2a2"/>
<circle cx="2516.5" cy="66.5" r="14.45" fill="none" stroke="#adadad" stroke-width="2.1"/>
<circle cx="2516.4" cy="59.7" r="2.7" fill="#adadad"/><path d="M2512.9,64 H2518.7 V72.9 H2520 V75.2 H2512.9 V72.9 H2514.2 V65.6 H2512.9Z" fill="#adadad"/>
<g fill="none" stroke="#000" stroke-width="3" stroke-linejoin="round" stroke-linecap="round"><path d="M2591.6,216 C2592.6,211.2 2593.8,208.2 2597.6,208.2 H2608.2 C2612,208.2 2613.2,211.2 2614.2,216"/><path d="M2587,220 C2587,217.6 2588.2,216.6 2590.2,216.6 H2615.6 C2617.6,216.6 2618.8,217.6 2618.8,220 V229.2 H2587Z"/><path d="M2587,229.2 V231.8 C2587,234.6 2592.8,234.6 2592.8,231.8 V229.6 M2618.8,229.2 V231.8 C2618.8,234.6 2613,234.6 2613,231.8 V229.6" stroke-width="2.8"/><path d="M2590.6,213.6 H2586.4 C2584,213.6 2584.2,217.2 2587.2,217.4 M2615.2,213.6 H2619.4 C2621.8,213.6 2621.6,217.2 2618.6,217.4" stroke-width="2.3"/><ellipse cx="2593.3" cy="223.3" rx="2.4" ry="1.6" stroke-width="2.1" transform="rotate(8 2593.3 223.3)"/><ellipse cx="2612.4" cy="223.3" rx="2.4" ry="1.6" stroke-width="2.1" transform="rotate(-8 2612.4 223.3)"/></g>
<g fill="none" stroke="#000" stroke-width="2.8" stroke-linejoin="round" stroke-linecap="round"><path d="M2681.6,205.6 V203.8 C2681.6,202.6 2682.4,202.2 2683.4,202.2 H2691.8 C2692.8,202.2 2693.6,202.6 2693.6,203.8 V205.6"/><path d="M2674.2,210.4 C2674.2,207 2676,205.8 2679,205.8 H2696 C2699,205.8 2700.8,207 2700.8,210.4 L2701.4,228.4 C2701.4,232 2699.4,233.6 2696.4,233.6 H2678.6 C2675.6,233.6 2673.6,232 2673.6,228.4Z"/><path d="M2674.4,210.2 H2700.6 M2674,219.8 H2701 M2687.4,210.4 V219.6"/><path d="M2674.4,223.8 H2680.6 C2684,223.8 2684,229 2680.6,229 H2674.2 M2700.6,223.8 H2694.4 C2691,223.8 2691,229 2694.4,229 H2700.8"/><path d="M2678.4,234.2 L2675.4,239.6 M2681.8,234.2 L2679.4,239.6 M2696.6,234.2 L2699.6,239.6 M2693.2,234.2 L2695.6,239.6" stroke-width="2.2"/><path d="M2669.8,238.4 H2704.6 M2673.4,240.2 H2679.2 M2695.8,240.2 H2701.6" stroke-width="2"/></g>
<circle cx="2772.8" cy="220.7" r="39" fill="#1a2441"/>
<g fill="none" stroke="#fff" stroke-width="1.3" stroke-linejoin="round" stroke-linecap="round"><path d="M2757.4,205 C2757.4,203.2 2758.4,202.4 2760,202.4 H2778.8 C2780.4,202.4 2781.2,203.2 2781.2,205 V221.6 M2757.4,205 V224.2 C2757.4,226.6 2758.6,227.6 2760.4,227.6 H2766"/><path d="M2757.6,206 H2781 M2757.6,219.4 H2781 M2757.6,220.6 H2775"/><path d="M2759.6,217 L2769,206.6 M2763,218.8 L2773.6,206.6 M2770.2,213 L2775.6,206.8"/><path d="M2757,211.6 H2754.6 V217.4 H2757 M2781.4,211.6 H2783.8 V217.4 H2781.4"/><circle cx="2762.2" cy="223.4" r="1.7"/><path d="M2766,223.4 H2767.4"/><path d="M2760.6,228 V229.6 C2760.6,231 2763.6,231 2763.6,229.6 V228"/><path d="M2769,228 L2772.2,222.8 H2785.4 L2789,228"/><path d="M2766.8,230.6 C2766.8,228.8 2767.8,228 2769.2,228 H2788.4 C2789.6,228 2790.2,228.8 2790.2,230.6 V235.8 H2766.8Z M2767,229.2 H2790"/><path d="M2774.6,227.6 L2779,222.9 M2779.4,225.6 L2781.6,223.2"/><path d="M2770.6,236 V237.6 C2770.6,239 2773.4,239 2773.4,237.6 V236 M2783.6,236 V237.6 C2783.6,239 2786.4,239 2786.4,237.6 V236"/><path d="M2774.8,232.4 H2782.2 M2771.8,232.4 H2772.4 M2784.6,232.4 H2785.2" stroke-width="1.5"/></g>
<path d="M2097.1,369.1 C2094.9,364.3 2088.2,362.3 2088.2,353.8 A8.90,8.90 0 1 1 2106.0,353.8 C2106.0,362.3 2099.3,364.3 2097.1,369.1Z" fill="#1b233d"/><circle cx="2097.1" cy="353.6" r="4.6" fill="#f3f3f3"/>
<path d="M2460.5,369.1 C2458.3,364.3 2451.6,362.3 2451.6,353.8 A8.90,8.90 0 1 1 2469.4,353.8 C2469.4,362.3 2462.7,364.3 2460.5,369.1Z" fill="#5cc8f6"/><circle cx="2460.5" cy="353.6" r="4.6" fill="#f3f3f3"/>
<g fill="none" stroke="#000" stroke-width="1.4" stroke-linecap="round"><circle cx="1739.4" cy="471.9" r="22.8"/><circle cx="1739.4" cy="471.9" r="20"/>
<path d="M1739.4,456.3 L1739.4,453.3"/>
<path d="M1747.6,457.7 L1748.7,455.8"/>
<path d="M1753.6,463.7 L1755.5,462.6"/>
<path d="M1755.0,471.9 L1758.0,471.9"/>
<path d="M1753.6,480.1 L1755.5,481.2"/>
<path d="M1747.6,486.1 L1748.7,488.0"/>
<path d="M1739.4,487.5 L1739.4,490.5"/>
<path d="M1731.2,486.1 L1730.1,488.0"/>
<path d="M1725.2,480.1 L1723.3,481.2"/>
<path d="M1723.8,471.9 L1720.8,471.9"/>
<path d="M1725.2,463.7 L1723.3,462.6"/>
<path d="M1731.2,457.7 L1730.1,455.8"/>
<path d="M1739.4,471.9 L1747.6,463.8 M1739.4,471.9 L1734,466.4 M1736.6,479.2 H1741.8"/><circle cx="1739.4" cy="471.9" r="1.5" fill="#fff"/></g>
<g fill="none" stroke="#000" stroke-width="1.6" stroke-linecap="round" stroke-linejoin="round"><path d="M1728.1,690 C1724,684 1716.9,677.4 1716.9,671.6 C1716.9,665.6 1721.6,661.6 1727.6,661.6 C1733.6,661.6 1738.3,665.6 1738.3,671.6 C1738.3,677.4 1732,684 1728.1,690Z"/><circle cx="1727.6" cy="671.6" r="4.9"/><path d="M1754.8,666 C1752,661.6 1748,657.4 1748,653 C1748,648.8 1751,646 1754.8,646 C1758.6,646 1761.8,648.8 1761.8,653 C1761.8,657.4 1757.6,661.6 1754.8,666Z"/><circle cx="1754.8" cy="652.6" r="1.7" fill="#000"/><path d="M1754.8,666.4 V670 C1752,673.6 1746,673 1743.4,676.4 C1740,680.6 1741.6,686.6 1733.6,689.6 L1729.6,690.4" stroke-dasharray="3.6 3"/></g>
<circle cx="1739.1" cy="954.2" r="23.5" fill="#f39a9d"/><circle cx="1739.1" cy="954.2" r="10.6" fill="#fff" stroke="#9a9a9a" stroke-width="2.4"/>
<g transform="translate(2175,943)" fill="none" stroke="#000" stroke-width="1.5" stroke-linecap="round" stroke-linejoin="round"><path d="M6,8.2 C5.6,3 8.5,0.8 11.9,0.8 C15.3,0.8 18.2,3 17.8,8.2"/><path d="M6.2,7.4 C9,7.2 12,6.6 14.3,5.3 C15.6,5.6 17,6.6 17.6,7.6"/><path d="M7.6,7.2 C7.2,11 8.6,14.3 11.9,14.3 C15.2,14.3 16.6,11 16.2,7.2"/><path d="M6,8.3 C4.8,8.4 5,10.6 6.9,10.7 M17.8,8.3 C19,8.4 18.8,10.6 16.9,10.7"/><path d="M9.6,13.6 V16.3 M14.2,13.6 V16.3"/><path d="M8.3,16.6 L11.9,20.8 L15.5,16.6 M8.3,16.6 L9.8,20.6 L11.9,19 L14,20.6 L15.5,16.6"/><path d="M1,32 V23.5 C1,19.5 4,17.8 8.3,16.6 M22.9,32 V23.5 C22.9,19.5 19.9,17.8 15.5,16.6"/><path d="M1,32 C1,33.2 1.6,33.5 2.6,33.5 H6.6 M9,33.5 H21.3 C22.3,33.5 22.9,33.2 22.9,32"/><path d="M11.9,19.4 L10.7,21.6 L9.3,30 L11.9,32.8 L14.5,30 L13.1,21.6 Z"/><path d="M5,23.5 V33 M19,23.5 V33" stroke="#6f6f6f" stroke-width="1.8" stroke-linecap="butt"/></g>
<g transform="translate(2515.4,943)" fill="none" stroke="#000" stroke-width="1.5" stroke-linecap="round" stroke-linejoin="round"><path d="M6,8.2 C5.6,3 8.5,0.8 11.9,0.8 C15.3,0.8 18.2,3 17.8,8.2"/><path d="M6.2,7.4 C9,7.2 12,6.6 14.3,5.3 C15.6,5.6 17,6.6 17.6,7.6"/><path d="M7.6,7.2 C7.2,11 8.6,14.3 11.9,14.3 C15.2,14.3 16.6,11 16.2,7.2"/><path d="M6,8.3 C4.8,8.4 5,10.6 6.9,10.7 M17.8,8.3 C19,8.4 18.8,10.6 16.9,10.7"/><path d="M9.6,13.6 V16.3 M14.2,13.6 V16.3"/><path d="M8.3,16.6 L11.9,20.8 L15.5,16.6 M8.3,16.6 L9.8,20.6 L11.9,19 L14,20.6 L15.5,16.6"/><path d="M1,32 V23.5 C1,19.5 4,17.8 8.3,16.6 M22.9,32 V23.5 C22.9,19.5 19.9,17.8 15.5,16.6"/><path d="M1,32 C1,33.2 1.6,33.5 2.6,33.5 H6.6 M9,33.5 H21.3 C22.3,33.5 22.9,33.2 22.9,32"/><path d="M11.9,19.4 L10.7,21.6 L9.3,30 L11.9,32.8 L14.5,30 L13.1,21.6 Z"/><path d="M5,23.5 V33 M19,23.5 V33" stroke="#6f6f6f" stroke-width="1.8" stroke-linecap="butt"/></g>
<g transform="translate(2783.4,943)" fill="none" stroke="#4cb034" stroke-width="1.5" stroke-linecap="round" stroke-linejoin="round"><path d="M6,8.2 C5.6,3 8.5,0.8 11.9,0.8 C15.3,0.8 18.2,3 17.8,8.2"/><path d="M6.2,7.4 C9,7.2 12,6.6 14.3,5.3 C15.6,5.6 17,6.6 17.6,7.6"/><path d="M7.6,7.2 C7.2,11 8.6,14.3 11.9,14.3 C15.2,14.3 16.6,11 16.2,7.2"/><path d="M6,8.3 C4.8,8.4 5,10.6 6.9,10.7 M17.8,8.3 C19,8.4 18.8,10.6 16.9,10.7"/><path d="M9.6,13.6 V16.3 M14.2,13.6 V16.3"/><path d="M8.3,16.6 L11.9,20.8 L15.5,16.6 M8.3,16.6 L9.8,20.6 L11.9,19 L14,20.6 L15.5,16.6"/><path d="M1,32 V23.5 C1,19.5 4,17.8 8.3,16.6 M22.9,32 V23.5 C22.9,19.5 19.9,17.8 15.5,16.6"/><path d="M1,32 C1,33.2 1.6,33.5 2.6,33.5 H6.6 M9,33.5 H21.3 C22.3,33.5 22.9,33.2 22.9,32"/><path d="M11.9,19.4 L10.7,21.6 L9.3,30 L11.9,32.8 L14.5,30 L13.1,21.6 Z"/><path d="M5,23.5 V33 M19,23.5 V33" stroke="#7cc86a" stroke-width="1.8" stroke-linecap="butt"/></g>
<circle cx="2098.2" cy="1190.3" r="15.7" fill="#c32ea3"/><text x="2098.2" y="1195.6" font-size="15.2" font-weight="700" fill="#fff" text-anchor="middle" font-family="Liberation Sans, sans-serif">T2</text>
<circle cx="2032.2" cy="1224.2" r="15.7" fill="#e4483f"/><text x="2032.2" y="1230.1" font-size="16.8" font-weight="700" fill="#fff" text-anchor="middle" font-family="Liberation Sans, sans-serif">A</text>
<circle cx="2055.3" cy="1257.4" r="15.7" fill="#7c7cc6"/><text x="2055.3" y="1263.3" font-size="16.8" font-weight="700" fill="#fff" text-anchor="middle" font-family="Liberation Sans, sans-serif">L</text>
<circle cx="2066.3" cy="1291.1" r="15.7" fill="#c68b2b"/><text x="2066.3" y="1296.4" font-size="15.2" font-weight="700" fill="#fff" text-anchor="middle" font-family="Liberation Sans, sans-serif">10</text>
<circle cx="2055.3" cy="1323.9" r="15.7" fill="#b6b930"/><text x="2055.3" y="1329.8" font-size="16.8" font-weight="700" fill="#fff" text-anchor="middle" font-family="Liberation Sans, sans-serif">J</text>
<circle cx="2665" cy="1190.3" r="15.7" fill="#7b4249"/><text x="2665" y="1196.2" font-size="16.8" font-weight="700" fill="#fff" text-anchor="middle" font-family="Liberation Sans, sans-serif">H</text>
<circle cx="2641.9" cy="1224.2" r="15.7" fill="#f0d63f"/><text x="2641.9" y="1230.1" font-size="16.8" font-weight="700" fill="#fff" text-anchor="middle" font-family="Liberation Sans, sans-serif">C</text>
<circle cx="2665" cy="1257.4" r="15.7" fill="#b6b930"/><text x="2665" y="1263.3" font-size="16.8" font-weight="700" fill="#fff" text-anchor="middle" font-family="Liberation Sans, sans-serif">J</text>
<circle cx="2676.1" cy="1291.1" r="15.7" fill="#ef7d3a"/><text x="2676.1" y="1297.0" font-size="16.8" font-weight="700" fill="#fff" text-anchor="middle" font-family="Liberation Sans, sans-serif">5</text>
<circle cx="2665" cy="1323.9" r="15.7" fill="#7c7cc6"/><text x="2665" y="1329.8" font-size="16.8" font-weight="700" fill="#fff" text-anchor="middle" font-family="Liberation Sans, sans-serif">L</text>
<path d="M2032.0,1540.6 C2029.9,1536.2 2023.7,1534.8 2023.7,1526.9 A8.30,8.30 0 1 1 2040.3,1526.9 C2040.3,1534.8 2034.1,1536.2 2032.0,1540.6Z" fill="#1b233d"/><circle cx="2032.0" cy="1526.7" r="4.3" fill="#fff"/>
<path d="M2309.8,1540.6 C2307.7,1536.2 2301.5,1534.8 2301.5,1526.9 A8.30,8.30 0 1 1 2318.1,1526.9 C2318.1,1534.8 2311.9,1536.2 2309.8,1540.6Z" fill="#5cc8f6"/><circle cx="2309.8" cy="1526.7" r="4.3" fill="#fff"/>
<path d="M1700,1583.6 H2860" stroke="#e6e6e6" stroke-width="0.8" stroke-dasharray="2 5"/><path d="M2860,1584 C2864,1583.4 2867,1582.4 2869,1581.4 V1584Z" fill="#111"/>
</svg>

<main id="texts">
<nav aria-label="Navigation principale">
<span class="t " style="left:1471.4px;top:53.3px;font-size:25.51px;line-height:25.51px;color:#ffffff;-webkit-text-stroke:0.5px #ffffff;transform:scaleX(0.9650);">Présentation</span>
<span class="t " style="left:1666.5px;top:53.3px;font-size:25.51px;line-height:25.51px;color:#ffffff;-webkit-text-stroke:0.5px #ffffff;transform:scaleX(0.9323);">Cartographie Salariés</span>
<span class="t " style="left:1953.4px;top:53.3px;font-size:25.51px;line-height:25.51px;color:#ffffff;-webkit-text-stroke:0.5px #ffffff;transform:scaleX(0.9635);">Implantations Actuelles</span>
<span class="t " style="left:2263.1px;top:53.3px;font-size:25.51px;line-height:25.51px;color:#a6a6a6;-webkit-text-stroke:0.4px #a6a6a6;transform:scaleX(0.9579);">Implantations Idéales</span>
<span class="t " style="left:2588.4px;top:53.3px;font-size:25.51px;line-height:25.51px;color:#1b233d;-webkit-text-stroke:0.4px #1b233d;transform:scaleX(0.9573);">Implantations Futures</span>
</nav>
<a class="logo" aria-label="MesEmployés par Geolocaux">
<span class="t thin" style="left:60.7px;top:25.1px;font-size:45.51px;line-height:45.51px;color:#ffffff;transform:scaleX(0.9488);">Mes</span>
<span class="t " style="left:139.8px;top:25.1px;font-size:45.51px;line-height:45.51px;color:#ffffff;font-weight:700;transform:scaleX(0.9552);">Employés</span>
<span class="t " style="left:209.0px;top:74.0px;font-size:20.87px;line-height:20.87px;color:#ffffff;font-weight:700;transform:scaleX(0.7881);">par</span>
<span class="t " style="left:239.8px;top:70.5px;font-size:24.93px;line-height:24.93px;color:#ffffff;font-weight:700;transform:scaleX(1.0294);">G</span>
<span class="t " style="left:260.1px;top:73.0px;font-size:21.16px;line-height:21.16px;color:#ffffff;font-weight:700;transform:scaleX(0.9038);">eolocaux</span>
</a>
<section aria-label="Filtres">
<span class="t " style="left:96.3px;top:195.7px;font-size:20.14px;line-height:20.14px;color:#111;font-weight:700;transform:scaleX(1.0597);">Filtre par salarié</span>
<span class="t " style="left:97.4px;top:226.1px;font-size:24.06px;line-height:24.06px;color:#111;-webkit-text-stroke:0.3px #111;transform:scaleX(0.9964);">Tous les salariés</span>
<span class="t " style="left:528.5px;top:195.7px;font-size:20.14px;line-height:20.14px;color:#111;font-weight:700;transform:scaleX(1.0438);">Filtre par commune</span>
<span class="t " style="left:529.5px;top:226.1px;font-size:24.06px;line-height:24.06px;color:#111;-webkit-text-stroke:0.3px #111;transform:scaleX(1.0050);">Toutes les communes</span>
<span class="t " style="left:964.1px;top:195.7px;font-size:20.14px;line-height:20.14px;color:#111;font-weight:700;transform:scaleX(1.0683);">Implantation de départ</span>
<span class="t " style="left:993.2px;top:226.1px;font-size:24.06px;line-height:24.06px;color:#111;-webkit-text-stroke:0.3px #111;transform:scaleX(1.0201);">Toutes les implantations de départ</span>
<span class="t " style="left:1567.4px;top:195.7px;font-size:20.14px;line-height:20.14px;color:#111;font-weight:700;transform:scaleX(1.0737);">Implantation d'arrivée</span>
<span class="t " style="left:1596.0px;top:226.1px;font-size:24.06px;line-height:24.06px;color:#111;-webkit-text-stroke:0.3px #111;transform:scaleX(1.0223);">Toutes les implantations d'arrivée</span>
<span class="t " style="left:2158.9px;top:209.2px;font-size:24.93px;line-height:24.93px;color:#111;-webkit-text-stroke:0.3px #111;transform:scaleX(1.0067);">Filtrer par entité</span>
</section>
<section aria-label="Comparaison des implantations">
<span class="t " style="left:1781.5px;top:356.2px;font-size:25.51px;line-height:25.51px;color:#8c8c8c;font-weight:700;transform:scaleX(0.9023);">Valeurs</span>
<span class="t " style="left:2113.9px;top:347.2px;font-size:22.9px;line-height:22.9px;color:#000;font-weight:700;transform:scaleX(0.9126);">Saint-Cloud</span>
<span class="t " style="left:2065.4px;top:375.2px;font-size:18.55px;line-height:18.55px;color:#000;font-weight:700;transform:scaleX(0.9299);">Implantation de départ</span>
<span class="t " style="left:2476.7px;top:347.2px;font-size:22.9px;line-height:22.9px;color:#000;font-weight:700;transform:scaleX(0.8944);">Ermont</span>
<span class="t " style="left:2410.2px;top:375.2px;font-size:18.55px;line-height:18.55px;color:#000;font-weight:700;transform:scaleX(0.9206);">Implantation d'arrivée</span>
<span class="t " style="left:2723.2px;top:356.2px;font-size:25.51px;line-height:25.51px;color:#8c8c8c;font-weight:700;transform:scaleX(0.8981);">Variations</span>
<span class="t " style="left:1782.1px;top:456.8px;font-size:22.75px;line-height:22.75px;color:#000;font-weight:700;transform:scaleX(0.9170);">Temps moyen</span>
<span class="t " style="left:2094.0px;top:453.5px;font-size:31.74px;line-height:31.74px;color:#000;font-weight:700;transform:scaleX(0.9931);">1h09min</span>
<span class="t " style="left:2435.4px;top:453.5px;font-size:31.74px;line-height:31.74px;color:#000;font-weight:700;transform:scaleX(0.9931);">1h12min</span>
<span class="t " style="left:2731.8px;top:453.5px;font-size:31.74px;line-height:31.74px;color:#e63329;font-weight:700;transform:scaleX(0.9987);">+2min</span>
<span class="t " style="left:1781.1px;top:510.6px;font-size:20.43px;line-height:20.43px;color:#4d4d4d;-webkit-text-stroke:0.5px #4d4d4d;transform:scaleX(0.9773);">Le plus proche</span>
<span class="t " style="left:2135.6px;top:510.6px;font-size:20.43px;line-height:20.43px;color:#4d4d4d;-webkit-text-stroke:0.5px #4d4d4d;transform:scaleX(1.0090);">3min</span>
<span class="t " style="left:2477.1px;top:510.6px;font-size:20.43px;line-height:20.43px;color:#4d4d4d;-webkit-text-stroke:0.5px #4d4d4d;transform:scaleX(0.9999);">9min</span>
<span class="t " style="left:2749.5px;top:511.6px;font-size:19.42px;line-height:19.42px;color:#e63329;font-weight:700;transform:scaleX(0.9915);">+5min</span>
<span class="t " style="left:1781.1px;top:546.5px;font-size:20.43px;line-height:20.43px;color:#4d4d4d;-webkit-text-stroke:0.5px #4d4d4d;transform:scaleX(0.9906);">Le plus loin</span>
<span class="t " style="left:2112.9px;top:546.5px;font-size:20.43px;line-height:20.43px;color:#4d4d4d;-webkit-text-stroke:0.5px #4d4d4d;transform:scaleX(1.0030);">12h53min</span>
<span class="t " style="left:2453.5px;top:546.5px;font-size:20.43px;line-height:20.43px;color:#4d4d4d;-webkit-text-stroke:0.5px #4d4d4d;transform:scaleX(1.0030);">13h03min</span>
<span class="t " style="left:2743.9px;top:547.5px;font-size:19.42px;line-height:19.42px;color:#e63329;font-weight:700;transform:scaleX(1.0065);">+10min</span>
<span class="t " style="left:1782.1px;top:581.9px;font-size:20.43px;line-height:20.43px;color:#4d4d4d;-webkit-text-stroke:0.5px #4d4d4d;transform:scaleX(0.9929);">Temps médian</span>
<span class="t " style="left:2130.0px;top:581.9px;font-size:20.43px;line-height:20.43px;color:#4d4d4d;-webkit-text-stroke:0.5px #4d4d4d;transform:scaleX(1.0025);">58min</span>
<span class="t " style="left:2471.1px;top:581.9px;font-size:20.43px;line-height:20.43px;color:#4d4d4d;-webkit-text-stroke:0.5px #4d4d4d;transform:scaleX(1.0025);">57min</span>
<span class="t " style="left:2749.5px;top:582.9px;font-size:19.42px;line-height:19.42px;color:#4cb034;font-weight:700;transform:scaleX(1.0455);">-10.5s</span>
<span class="t " style="left:1781.2px;top:654.2px;font-size:22.75px;line-height:22.75px;color:#000;font-weight:700;transform:scaleX(0.9113);">Distance moyenne</span>
<span class="t " style="left:2113.8px;top:649.4px;font-size:31.74px;line-height:31.74px;color:#000;font-weight:700;transform:scaleX(0.9858);">37 km</span>
<span class="t " style="left:2454.5px;top:649.4px;font-size:31.74px;line-height:31.74px;color:#000;font-weight:700;transform:scaleX(0.9936);">46 km</span>
<span class="t " style="left:2732.8px;top:649.4px;font-size:31.74px;line-height:31.74px;color:#e63329;font-weight:700;transform:scaleX(0.9893);">+9 km</span>
<span class="t " style="left:1781.1px;top:706.3px;font-size:20.43px;line-height:20.43px;color:#4d4d4d;-webkit-text-stroke:0.5px #4d4d4d;transform:scaleX(0.9773);">Le plus proche</span>
<span class="t " style="left:2136.0px;top:706.3px;font-size:20.43px;line-height:20.43px;color:#4d4d4d;-webkit-text-stroke:0.5px #4d4d4d;transform:scaleX(1.0037);">1 km</span>
<span class="t " style="left:2477.0px;top:706.3px;font-size:20.43px;line-height:20.43px;color:#4d4d4d;-webkit-text-stroke:0.5px #4d4d4d;transform:scaleX(0.9943);">1 km</span>
<span class="t " style="left:2750.0px;top:707.3px;font-size:19.42px;line-height:19.42px;color:#4d4d4d;font-weight:700;transform:scaleX(0.9908);">+0 km</span>
<span class="t " style="left:1781.1px;top:741.7px;font-size:20.43px;line-height:20.43px;color:#4d4d4d;-webkit-text-stroke:0.5px #4d4d4d;transform:scaleX(0.9906);">Le plus loin</span>
<span class="t " style="left:2123.5px;top:741.7px;font-size:20.43px;line-height:20.43px;color:#4d4d4d;-webkit-text-stroke:0.5px #4d4d4d;transform:scaleX(1.0237);">770 km</span>
<span class="t " style="left:2464.6px;top:741.7px;font-size:20.43px;line-height:20.43px;color:#4d4d4d;-webkit-text-stroke:0.5px #4d4d4d;transform:scaleX(1.0160);">797 km</span>
<span class="t " style="left:2746.7px;top:742.7px;font-size:19.42px;line-height:19.42px;color:#4cb034;font-weight:700;transform:scaleX(1.0174);">-27 km</span>
<span class="t " style="left:1781.1px;top:777.3px;font-size:20.43px;line-height:20.43px;color:#4d4d4d;-webkit-text-stroke:0.5px #4d4d4d;transform:scaleX(0.9869);">Distance médianne</span>
<span class="t " style="left:2130.0px;top:777.3px;font-size:20.43px;line-height:20.43px;color:#4d4d4d;-webkit-text-stroke:0.5px #4d4d4d;transform:scaleX(1.0149);">18 km</span>
<span class="t " style="left:2470.1px;top:777.3px;font-size:20.43px;line-height:20.43px;color:#4d4d4d;-webkit-text-stroke:0.5px #4d4d4d;transform:scaleX(1.0336);">27 km</span>
<span class="t " style="left:2750.0px;top:778.3px;font-size:19.42px;line-height:19.42px;color:#e63329;font-weight:700;transform:scaleX(0.9908);">+9 km</span>
<span class="t " style="left:1781.2px;top:848.9px;font-size:22.75px;line-height:22.75px;color:#000;font-weight:700;transform:scaleX(0.8904);">Emission CO²</span>
<span class="t " style="left:2098.9px;top:845.7px;font-size:31.74px;line-height:31.74px;color:#000;font-weight:700;transform:scaleX(0.9680);">354 geC</span>
<span class="t " style="left:2439.8px;top:845.7px;font-size:31.74px;line-height:31.74px;color:#000;font-weight:700;transform:scaleX(0.9737);">542 geC</span>
<span class="t " style="left:2708.3px;top:845.7px;font-size:31.74px;line-height:31.74px;color:#e63329;font-weight:700;transform:scaleX(0.9840);">+188 geC</span>
<span class="t " style="left:1782.1px;top:940.7px;font-size:22.46px;line-height:22.46px;color:#000;font-weight:700;transform:scaleX(0.9110);">Cas sensibles</span>
<span class="t " style="left:1782.1px;top:971.0px;font-size:17.97px;line-height:17.97px;color:#000;transform:scaleX(0.9918);">Temps de trajet &gt; 1 h</span>
<span class="t " style="left:2111.4px;top:945.8px;font-size:32.32px;line-height:32.32px;color:#000;font-weight:700;transform:scaleX(1.0208);">196</span>
<span class="t " style="left:2452.0px;top:945.8px;font-size:32.32px;line-height:32.32px;color:#000;font-weight:700;transform:scaleX(1.0050);">194</span>
<span class="t " style="left:2743.8px;top:945.8px;font-size:32.32px;line-height:32.32px;color:#4cb034;font-weight:700;transform:scaleX(1.0501);">-2</span>
</section>
<section aria-label="Top 5 des lignes">
<span class="t " style="left:1792.2px;top:1126.6px;font-size:22.03px;line-height:22.03px;color:#000;font-weight:700;transform:scaleX(0.9324);">Top 5 des lignes de l'implantation de départ</span>
<span class="t " style="left:2392.2px;top:1126.6px;font-size:22.03px;line-height:22.03px;color:#000;font-weight:700;transform:scaleX(0.9297);">Top 5 des lignes de l'implantation d'arrivée</span>
<span class="t " style="left:1895.6px;top:1177.8px;font-size:22.75px;line-height:22.75px;color:#444;transform:scaleX(0.9412);">1. TRAMWAY ligne</span>
<span class="t " style="left:1895.6px;top:1211.9px;font-size:22.75px;line-height:22.75px;color:#444;transform:scaleX(0.9083);">2. RER ligne</span>
<span class="t " style="left:1896.5px;top:1244.7px;font-size:22.75px;line-height:22.75px;color:#444;transform:scaleX(0.9336);">3. TRAIN ligne</span>
<span class="t " style="left:1896.5px;top:1278.9px;font-size:22.75px;line-height:22.75px;color:#444;transform:scaleX(0.9189);">4. METRO ligne</span>
<span class="t " style="left:1896.5px;top:1311.6px;font-size:22.75px;line-height:22.75px;color:#444;transform:scaleX(0.9336);">5. TRAIN ligne</span>
<span class="t " style="left:2505.3px;top:1177.8px;font-size:22.75px;line-height:22.75px;color:#444;transform:scaleX(0.9407);">1. TRAIN ligne</span>
<span class="t " style="left:2505.3px;top:1211.9px;font-size:22.75px;line-height:22.75px;color:#444;transform:scaleX(0.9043);">2. RER ligne</span>
<span class="t " style="left:2506.2px;top:1244.7px;font-size:22.75px;line-height:22.75px;color:#444;transform:scaleX(0.9343);">3. TRAIN ligne</span>
<span class="t " style="left:2506.2px;top:1278.9px;font-size:22.75px;line-height:22.75px;color:#444;transform:scaleX(0.9220);">4. METRO ligne</span>
<span class="t " style="left:2506.2px;top:1311.6px;font-size:22.75px;line-height:22.75px;color:#444;transform:scaleX(0.9343);">5. TRAIN ligne</span>
</section>
<section aria-label="Temps moyen de transport">
<span class="t " style="left:1875.2px;top:1467.0px;font-size:26.67px;line-height:26.67px;color:#000;font-weight:700;transform:scaleX(0.9204);">Temps moyen de transport entre l'ancienne et la nouvelle implantation</span>
<span class="t " style="left:2047.7px;top:1517.4px;font-size:22.9px;line-height:22.9px;color:#000;transform:scaleX(0.9760);">Implantation de départ</span>
<span class="t " style="left:2326.2px;top:1517.4px;font-size:22.9px;line-height:22.9px;color:#000;transform:scaleX(0.9703);">Implantation d'arrivée</span>
</section>
</main>
</body>
</html>
